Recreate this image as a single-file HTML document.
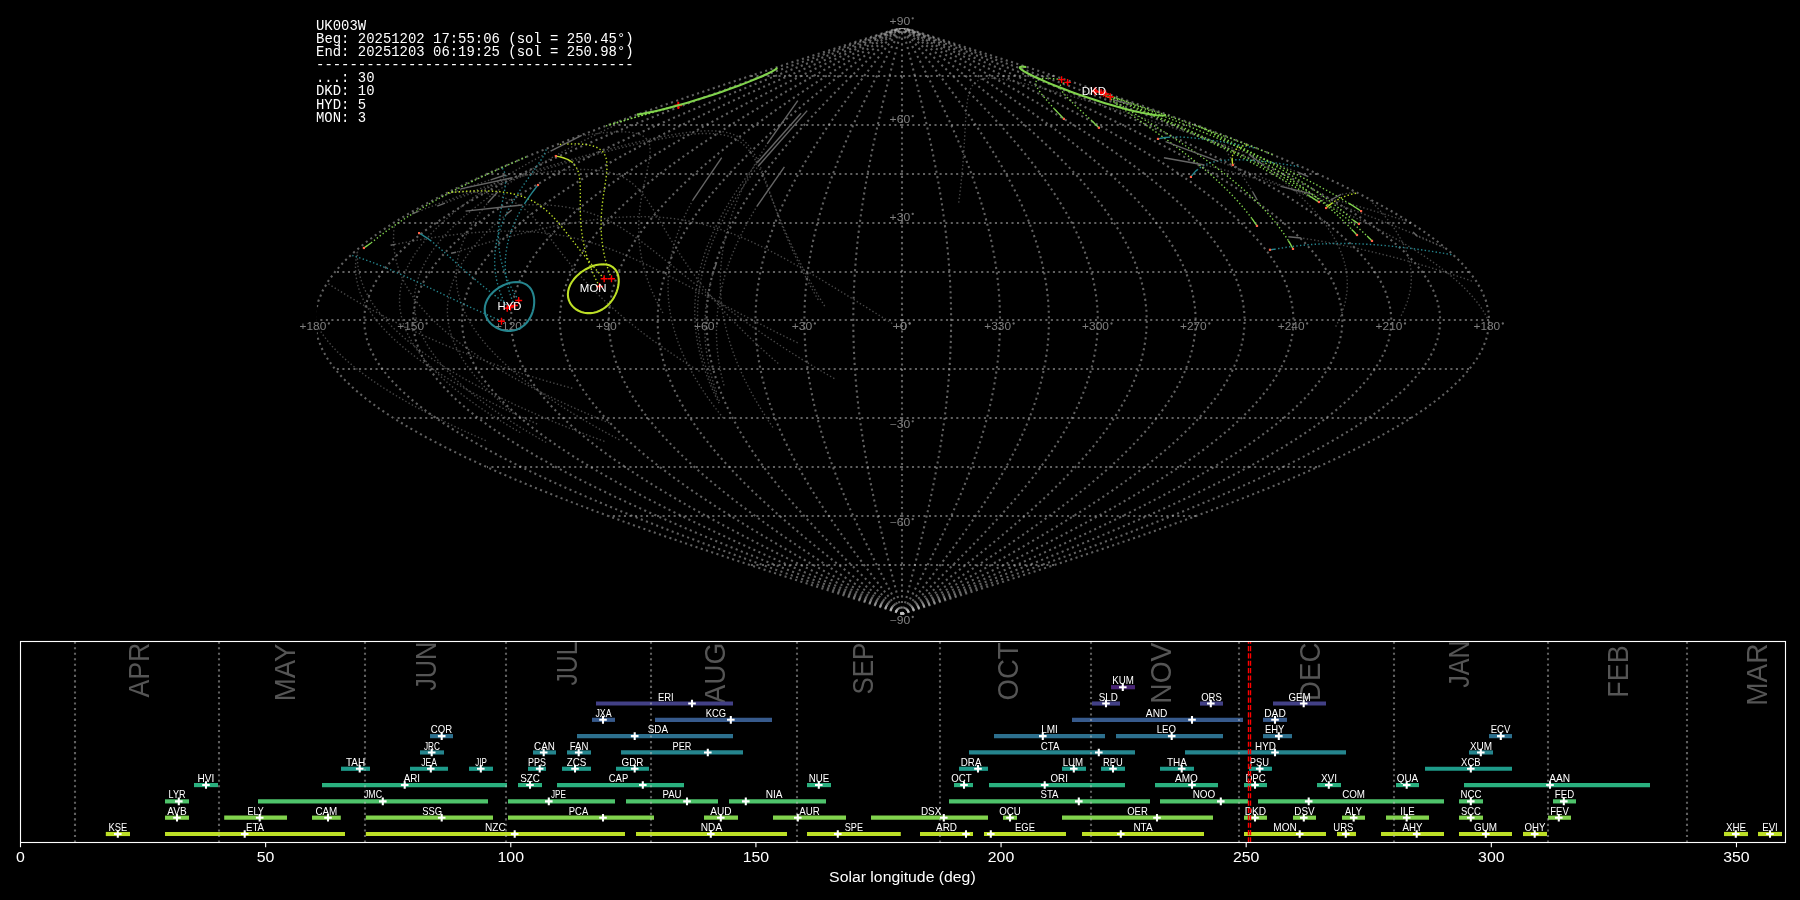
<!DOCTYPE html>
<html><head><meta charset="utf-8"><title>UK003W shower association</title>
<style>html,body{margin:0;padding:0;background:#000;}svg{display:block;font-family:"Liberation Sans",sans-serif;}text{filter:grayscale(1);}</style></head>
<body>
<svg width="1800" height="900" viewBox="0 0 1800 900">
<rect width="1800" height="900" fill="#000"/>
<g id="grid" clip-path="url(#skyclip)" fill="none" stroke="#c0c0c0" stroke-opacity="0.5" stroke-width="2.08" stroke-dasharray="2.08 3.44">
<path d="M902 614L902 604L902 594L902 585L902 575L902 565L902 555L902 546L902 536L902 526L902 516L902 506L902 497L902 487L902 477L902 467L902 457L902 448L902 438L902 428L902 418L902 409L902 399L902 389L902 379L902 369L902 360L902 350L902 340L902 330L902 320L902 311L902 301L902 291L902 281L902 272L902 262L902 252L902 242L902 232L902 223L902 213L902 203L902 193L902 184L902 174L902 164L902 154L902 144L902 135L902 125L902 115L902 105L902 95L902 86L902 76L902 66L902 56L902 47L902 37L902 27"/>
<path d="M902.2 613.99L899.64 604.21L897.09 594.42L894.55 584.64L892.03 574.86L889.54 565.08L887.08 555.29L884.67 545.51L882.3 535.73L879.99 525.94L877.74 516.16L875.56 506.38L873.45 496.59L871.42 486.81L869.47 477.03L867.61 467.25L865.85 457.46L864.19 447.68L862.63 437.9L861.18 428.11L859.84 418.33L858.62 408.55L857.51 398.76L856.53 388.98L855.68 379.2L854.95 369.42L854.35 359.63L853.89 349.85L853.55 340.07L853.35 330.28L853.29 320.5L853.35 310.72L853.55 300.93L853.89 291.15L854.35 281.37L854.95 271.58L855.68 261.8L856.53 252.02L857.51 242.24L858.62 232.45L859.84 222.67L861.18 212.89L862.63 203.1L864.19 193.32L865.85 183.54L867.61 173.75L869.47 163.97L871.42 154.19L873.45 144.41L875.56 134.62L877.74 124.84L879.99 115.06L882.3 105.27L884.67 95.49L887.08 85.71L889.54 75.92L892.03 66.14L894.55 56.36L897.09 46.58L899.64 36.79L902.2 27.01"/>
<path d="M902.2 613.99L897.08 604.21L891.97 594.42L886.9 584.64L881.86 574.86L876.88 565.08L871.97 555.29L867.14 545.51L862.41 535.73L857.79 525.94L853.29 516.16L848.92 506.38L844.7 496.59L840.63 486.81L836.74 477.03L833.02 467.25L829.5 457.46L826.17 447.68L823.05 437.9L820.15 428.11L817.48 418.33L815.03 408.55L812.83 398.76L810.87 388.98L809.16 379.2L807.7 369.42L806.51 359.63L805.57 349.85L804.91 340.07L804.5 330.28L804.37 320.5L804.5 310.72L804.91 300.93L805.57 291.15L806.51 281.37L807.7 271.58L809.16 261.8L810.87 252.02L812.83 242.24L815.03 232.45L817.48 222.67L820.15 212.89L823.05 203.1L826.17 193.32L829.5 183.54L833.02 173.75L836.74 163.97L840.63 154.19L844.7 144.41L848.92 134.62L853.29 124.84L857.79 115.06L862.41 105.27L867.14 95.49L871.97 85.71L876.88 75.92L881.86 66.14L886.9 56.36L891.97 46.58L897.08 36.79L902.2 27.01"/>
<path d="M902.2 613.99L894.52 604.21L886.86 594.42L879.24 584.64L871.69 574.86L864.22 565.08L856.85 555.29L849.61 545.51L842.51 535.73L835.58 525.94L828.83 516.16L822.28 506.38L815.95 496.59L809.85 486.81L804.01 477.03L798.44 467.25L793.15 457.46L788.16 447.68L783.48 437.9L779.13 428.11L775.12 418.33L771.45 408.55L768.14 398.76L765.2 388.98L762.64 379.2L760.46 369.42L758.66 359.63L757.26 349.85L756.26 340.07L755.66 330.28L755.46 320.5L755.66 310.72L756.26 300.93L757.26 291.15L758.66 281.37L760.46 271.58L762.64 261.8L765.2 252.02L768.14 242.24L771.45 232.45L775.12 222.67L779.13 212.89L783.48 203.1L788.16 193.32L793.15 183.54L798.44 173.75L804.01 163.97L809.85 154.19L815.95 144.41L822.28 134.62L828.83 124.84L835.58 115.06L842.51 105.27L849.61 95.49L856.85 85.71L864.22 75.92L871.69 66.14L879.24 56.36L886.86 46.58L894.52 36.79L902.2 27.01"/>
<path d="M902.2 613.99L891.96 604.21L881.75 594.42L871.59 584.64L861.52 574.86L851.56 565.08L841.74 555.29L832.08 545.51L822.62 535.73L813.37 525.94L804.37 516.16L795.64 506.38L787.19 496.59L779.07 486.81L771.28 477.03L763.85 467.25L756.8 457.46L750.14 447.68L743.91 437.9L738.11 428.11L732.75 418.33L727.87 408.55L723.46 398.76L719.54 388.98L716.12 379.2L713.21 369.42L710.82 359.63L708.95 349.85L707.61 340.07L706.81 330.28L706.54 320.5L706.81 310.72L707.61 300.93L708.95 291.15L710.82 281.37L713.21 271.58L716.12 261.8L719.54 252.02L723.46 242.24L727.87 232.45L732.75 222.67L738.11 212.89L743.91 203.1L750.14 193.32L756.8 183.54L763.85 173.75L771.28 163.97L779.07 154.19L787.19 144.41L795.64 134.62L804.37 124.84L813.37 115.06L822.62 105.27L832.08 95.49L841.74 85.71L851.56 75.92L861.52 66.14L871.59 56.36L881.75 46.58L891.96 36.79L902.2 27.01"/>
<path d="M902.2 613.99L889.4 604.21L876.63 594.42L863.94 584.64L851.35 574.86L838.9 565.08L826.62 555.29L814.55 545.51L802.72 535.73L791.17 525.94L779.91 516.16L768.99 506.38L758.44 496.59L748.28 486.81L738.55 477.03L729.26 467.25L720.45 457.46L712.13 447.68L704.33 437.9L697.08 428.11L690.39 418.33L684.28 408.55L678.77 398.76L673.87 388.98L669.6 379.2L665.96 369.42L662.97 359.63L660.64 349.85L658.96 340.07L657.96 330.28L657.62 320.5L657.96 310.72L658.96 300.93L660.64 291.15L662.97 281.37L665.96 271.58L669.6 261.8L673.87 252.02L678.77 242.24L684.28 232.45L690.39 222.67L697.08 212.89L704.33 203.1L712.13 193.32L720.45 183.54L729.26 173.75L738.55 163.97L748.28 154.19L758.44 144.41L768.99 134.62L779.91 124.84L791.17 115.06L802.72 105.27L814.55 95.49L826.62 85.71L838.9 75.92L851.35 66.14L863.94 56.36L876.63 46.58L889.4 36.79L902.2 27.01"/>
<path d="M902.2 613.99L886.84 604.21L871.52 594.42L856.29 584.64L841.18 574.86L826.24 565.08L811.51 555.29L797.02 545.51L782.83 535.73L768.96 525.94L755.46 516.16L742.35 506.38L729.69 496.59L717.5 486.81L705.82 477.03L694.67 467.25L684.09 457.46L674.12 447.68L664.76 437.9L656.06 428.11L648.03 418.33L640.7 408.55L634.08 398.76L628.2 388.98L623.07 379.2L618.71 369.42L615.12 359.63L612.32 349.85L610.32 340.07L609.11 330.28L608.71 320.5L609.11 310.72L610.32 300.93L612.32 291.15L615.12 281.37L618.71 271.58L623.07 261.8L628.2 252.02L634.08 242.24L640.7 232.45L648.03 222.67L656.06 212.89L664.76 203.1L674.12 193.32L684.09 183.54L694.67 173.75L705.82 163.97L717.5 154.19L729.69 144.41L742.35 134.62L755.46 124.84L768.96 115.06L782.83 105.27L797.02 95.49L811.51 85.71L826.24 75.92L841.18 66.14L856.29 56.36L871.52 46.58L886.84 36.79L902.2 27.01"/>
<path d="M902.2 613.99L884.28 604.21L866.41 594.42L848.64 584.64L831.01 574.86L813.58 565.08L796.39 555.29L779.49 545.51L762.93 535.73L746.75 525.94L731 516.16L715.71 506.38L700.94 496.59L686.72 486.81L673.09 477.03L660.08 467.25L647.74 457.46L636.1 447.68L625.19 437.9L615.04 428.11L605.67 418.33L597.11 408.55L589.4 398.76L582.54 388.98L576.55 379.2L571.46 369.42L567.28 359.63L564.01 349.85L561.67 340.07L560.26 330.28L559.8 320.5L560.26 310.72L561.67 300.93L564.01 291.15L567.28 281.37L571.46 271.58L576.55 261.8L582.54 252.02L589.4 242.24L597.11 232.45L605.67 222.67L615.04 212.89L625.19 203.1L636.1 193.32L647.74 183.54L660.08 173.75L673.09 163.97L686.72 154.19L700.94 144.41L715.71 134.62L731 124.84L746.75 115.06L762.93 105.27L779.49 95.49L796.39 85.71L813.58 75.92L831.01 66.14L848.64 56.36L866.41 46.58L884.28 36.79L902.2 27.01"/>
<path d="M902.2 613.99L881.72 604.21L861.3 594.42L840.98 584.64L820.84 574.86L800.92 565.08L781.28 555.29L761.96 545.51L743.04 535.73L724.54 525.94L706.54 516.16L689.07 506.38L672.19 496.59L655.93 486.81L640.36 477.03L625.49 467.25L611.39 457.46L598.09 447.68L585.62 437.9L574.01 428.11L563.31 418.33L553.53 408.55L544.71 398.76L536.87 388.98L530.03 379.2L524.21 369.42L519.43 359.63L515.7 349.85L513.02 340.07L511.42 330.28L510.88 320.5L511.42 310.72L513.02 300.93L515.7 291.15L519.43 281.37L524.21 271.58L530.03 261.8L536.87 252.02L544.71 242.24L553.53 232.45L563.31 222.67L574.01 212.89L585.62 203.1L598.09 193.32L611.39 183.54L625.49 173.75L640.36 163.97L655.93 154.19L672.19 144.41L689.07 134.62L706.54 124.84L724.54 115.06L743.04 105.27L761.96 95.49L781.28 85.71L800.92 75.92L820.84 66.14L840.98 56.36L861.3 46.58L881.72 36.79L902.2 27.01"/>
<path d="M902.2 613.99L879.16 604.21L856.18 594.42L833.33 584.64L810.67 574.86L788.26 565.08L766.16 555.29L744.43 545.51L723.14 535.73L702.34 525.94L682.08 516.16L662.43 506.38L643.44 496.59L625.15 486.81L607.63 477.03L590.91 467.25L575.04 457.46L560.07 447.68L546.04 437.9L532.99 428.11L520.95 418.33L509.95 408.55L500.03 398.76L491.21 388.98L483.51 379.2L476.97 369.42L471.59 359.63L467.39 349.85L464.38 340.07L462.57 330.28L461.97 320.5L462.57 310.72L464.38 300.93L467.39 291.15L471.59 281.37L476.97 271.58L483.51 261.8L491.21 252.02L500.03 242.24L509.95 232.45L520.95 222.67L532.99 212.89L546.04 203.1L560.07 193.32L575.04 183.54L590.91 173.75L607.63 163.97L625.15 154.19L643.44 144.41L662.43 134.62L682.08 124.84L702.34 115.06L723.14 105.27L744.43 95.49L766.16 85.71L788.26 75.92L810.67 66.14L833.33 56.36L856.18 46.58L879.16 36.79L902.2 27.01"/>
<path d="M902.2 613.99L876.6 604.21L851.07 594.42L825.68 584.64L800.5 574.86L775.6 565.08L751.04 555.29L726.9 545.51L703.24 535.73L680.13 525.94L657.62 516.16L635.79 506.38L614.68 496.59L594.37 486.81L574.89 477.03L556.32 467.25L538.69 457.46L522.06 447.68L506.47 437.9L491.96 428.11L478.58 418.33L466.36 408.55L455.34 398.76L445.54 388.98L436.99 379.2L429.72 369.42L423.74 359.63L419.07 349.85L415.73 340.07L413.72 330.28L413.05 320.5L413.72 310.72L415.73 300.93L419.07 291.15L423.74 281.37L429.72 271.58L436.99 261.8L445.54 252.02L455.34 242.24L466.36 232.45L478.58 222.67L491.96 212.89L506.47 203.1L522.06 193.32L538.69 183.54L556.32 173.75L574.89 163.97L594.37 154.19L614.68 144.41L635.79 134.62L657.62 124.84L680.13 115.06L703.24 105.27L726.9 95.49L751.04 85.71L775.6 75.92L800.5 66.14L825.68 56.36L851.07 46.58L876.6 36.79L902.2 27.01"/>
<path d="M902.2 613.99L874.04 604.21L845.96 594.42L818.03 584.64L790.33 574.86L762.94 565.08L735.93 555.29L709.37 545.51L683.35 535.73L657.92 525.94L633.17 516.16L609.15 506.38L585.93 496.59L563.58 486.81L542.16 477.03L521.73 467.25L502.34 457.46L484.04 447.68L466.9 437.9L450.94 428.11L436.22 418.33L422.78 408.55L410.65 398.76L399.87 388.98L390.47 379.2L382.47 369.42L375.89 359.63L370.76 349.85L367.08 340.07L364.87 330.28L364.13 320.5L364.87 310.72L367.08 300.93L370.76 291.15L375.89 281.37L382.47 271.58L390.47 261.8L399.87 252.02L410.65 242.24L422.78 232.45L436.22 222.67L450.94 212.89L466.9 203.1L484.04 193.32L502.34 183.54L521.73 173.75L542.16 163.97L563.58 154.19L585.93 144.41L609.15 134.62L633.17 124.84L657.92 115.06L683.35 105.27L709.37 95.49L735.93 85.71L762.94 75.92L790.33 66.14L818.03 56.36L845.96 46.58L874.04 36.79L902.2 27.01"/>
<path d="M902.2 613.99L871.48 604.21L840.84 594.42L810.38 584.64L780.16 574.86L750.28 565.08L720.81 555.29L691.85 545.51L663.45 535.73L635.72 525.94L608.71 516.16L582.51 506.38L557.18 496.59L532.8 486.81L509.43 477.03L487.14 467.25L465.99 457.46L446.03 447.68L427.32 437.9L409.92 428.11L393.86 418.33L379.2 408.55L365.97 398.76L354.21 388.98L343.95 379.2L335.22 369.42L328.05 359.63L322.45 349.85L318.44 340.07L316.02 330.28L315.22 320.5L316.02 310.72L318.44 300.93L322.45 291.15L328.05 281.37L335.22 271.58L343.95 261.8L354.21 252.02L365.97 242.24L379.2 232.45L393.86 222.67L409.92 212.89L427.32 203.1L446.03 193.32L465.99 183.54L487.14 173.75L509.43 163.97L532.8 154.19L557.18 144.41L582.51 134.62L608.71 124.84L635.72 115.06L663.45 105.27L691.85 95.49L720.81 85.71L750.28 75.92L780.16 66.14L810.38 56.36L840.84 46.58L871.48 36.79L902.2 27.01"/>
<path d="M902.2 613.99L932.92 604.21L963.56 594.42L994.02 584.64L1024.24 574.86L1054.12 565.08L1083.59 555.29L1112.55 545.51L1140.95 535.73L1168.68 525.94L1195.69 516.16L1221.89 506.38L1247.22 496.59L1271.6 486.81L1294.97 477.03L1317.26 467.25L1338.41 457.46L1358.37 447.68L1377.08 437.9L1394.48 428.11L1410.54 418.33L1425.2 408.55L1438.43 398.76L1450.19 388.98L1460.45 379.2L1469.18 369.42L1476.35 359.63L1481.95 349.85L1485.96 340.07L1488.38 330.28L1489.18 320.5L1488.38 310.72L1485.96 300.93L1481.95 291.15L1476.35 281.37L1469.18 271.58L1460.45 261.8L1450.19 252.02L1438.43 242.24L1425.2 232.45L1410.54 222.67L1394.48 212.89L1377.08 203.1L1358.37 193.32L1338.41 183.54L1317.26 173.75L1294.97 163.97L1271.6 154.19L1247.22 144.41L1221.89 134.62L1195.69 124.84L1168.68 115.06L1140.95 105.27L1112.55 95.49L1083.59 85.71L1054.12 75.92L1024.24 66.14L994.02 56.36L963.56 46.58L932.92 36.79L902.2 27.01"/>
<path d="M902.2 613.99L930.36 604.21L958.44 594.42L986.37 584.64L1014.07 574.86L1041.46 565.08L1068.47 555.29L1095.03 545.51L1121.05 535.73L1146.48 525.94L1171.23 516.16L1195.25 506.38L1218.47 496.59L1240.82 486.81L1262.24 477.03L1282.67 467.25L1302.06 457.46L1320.36 447.68L1337.5 437.9L1353.46 428.11L1368.18 418.33L1381.62 408.55L1393.75 398.76L1404.53 388.98L1413.93 379.2L1421.93 369.42L1428.51 359.63L1433.64 349.85L1437.32 340.07L1439.53 330.28L1440.27 320.5L1439.53 310.72L1437.32 300.93L1433.64 291.15L1428.51 281.37L1421.93 271.58L1413.93 261.8L1404.53 252.02L1393.75 242.24L1381.62 232.45L1368.18 222.67L1353.46 212.89L1337.5 203.1L1320.36 193.32L1302.06 183.54L1282.67 173.75L1262.24 163.97L1240.82 154.19L1218.47 144.41L1195.25 134.62L1171.23 124.84L1146.48 115.06L1121.05 105.27L1095.03 95.49L1068.47 85.71L1041.46 75.92L1014.07 66.14L986.37 56.36L958.44 46.58L930.36 36.79L902.2 27.01"/>
<path d="M902.2 613.99L927.8 604.21L953.33 594.42L978.72 584.64L1003.9 574.86L1028.8 565.08L1053.36 555.29L1077.5 545.51L1101.16 535.73L1124.27 525.94L1146.78 516.16L1168.61 506.38L1189.72 496.59L1210.03 486.81L1229.51 477.03L1248.08 467.25L1265.71 457.46L1282.34 447.68L1297.93 437.9L1312.44 428.11L1325.82 418.33L1338.04 408.55L1349.06 398.76L1358.86 388.98L1367.41 379.2L1374.68 369.42L1380.66 359.63L1385.33 349.85L1388.67 340.07L1390.68 330.28L1391.35 320.5L1390.68 310.72L1388.67 300.93L1385.33 291.15L1380.66 281.37L1374.68 271.58L1367.41 261.8L1358.86 252.02L1349.06 242.24L1338.04 232.45L1325.82 222.67L1312.44 212.89L1297.93 203.1L1282.34 193.32L1265.71 183.54L1248.08 173.75L1229.51 163.97L1210.03 154.19L1189.72 144.41L1168.61 134.62L1146.78 124.84L1124.27 115.06L1101.16 105.27L1077.5 95.49L1053.36 85.71L1028.8 75.92L1003.9 66.14L978.72 56.36L953.33 46.58L927.8 36.79L902.2 27.01"/>
<path d="M902.2 613.99L925.24 604.21L948.22 594.42L971.07 584.64L993.73 574.86L1016.14 565.08L1038.24 555.29L1059.97 545.51L1081.26 535.73L1102.06 525.94L1122.32 516.16L1141.97 506.38L1160.96 496.59L1179.25 486.81L1196.77 477.03L1213.49 467.25L1229.36 457.46L1244.33 447.68L1258.36 437.9L1271.41 428.11L1283.45 418.33L1294.45 408.55L1304.37 398.76L1313.19 388.98L1320.89 379.2L1327.43 369.42L1332.81 359.63L1337.01 349.85L1340.02 340.07L1341.83 330.28L1342.43 320.5L1341.83 310.72L1340.02 300.93L1337.01 291.15L1332.81 281.37L1327.43 271.58L1320.89 261.8L1313.19 252.02L1304.37 242.24L1294.45 232.45L1283.45 222.67L1271.41 212.89L1258.36 203.1L1244.33 193.32L1229.36 183.54L1213.49 173.75L1196.77 163.97L1179.25 154.19L1160.96 144.41L1141.97 134.62L1122.32 124.84L1102.06 115.06L1081.26 105.27L1059.97 95.49L1038.24 85.71L1016.14 75.92L993.73 66.14L971.07 56.36L948.22 46.58L925.24 36.79L902.2 27.01"/>
<path d="M902.2 613.99L922.68 604.21L943.1 594.42L963.42 584.64L983.56 574.86L1003.48 565.08L1023.12 555.29L1042.44 545.51L1061.36 535.73L1079.86 525.94L1097.86 516.16L1115.33 506.38L1132.21 496.59L1148.47 486.81L1164.04 477.03L1178.91 467.25L1193.01 457.46L1206.31 447.68L1218.78 437.9L1230.39 428.11L1241.09 418.33L1250.87 408.55L1259.69 398.76L1267.53 388.98L1274.37 379.2L1280.19 369.42L1284.97 359.63L1288.7 349.85L1291.38 340.07L1292.98 330.28L1293.52 320.5L1292.98 310.72L1291.38 300.93L1288.7 291.15L1284.97 281.37L1280.19 271.58L1274.37 261.8L1267.53 252.02L1259.69 242.24L1250.87 232.45L1241.09 222.67L1230.39 212.89L1218.78 203.1L1206.31 193.32L1193.01 183.54L1178.91 173.75L1164.04 163.97L1148.47 154.19L1132.21 144.41L1115.33 134.62L1097.86 124.84L1079.86 115.06L1061.36 105.27L1042.44 95.49L1023.12 85.71L1003.48 75.92L983.56 66.14L963.42 56.36L943.1 46.58L922.68 36.79L902.2 27.01"/>
<path d="M902.2 613.99L920.12 604.21L937.99 594.42L955.76 584.64L973.39 574.86L990.82 565.08L1008.01 555.29L1024.91 545.51L1041.47 535.73L1057.65 525.94L1073.4 516.16L1088.69 506.38L1103.46 496.59L1117.68 486.81L1131.31 477.03L1144.32 467.25L1156.66 457.46L1168.3 447.68L1179.21 437.9L1189.36 428.11L1198.73 418.33L1207.29 408.55L1215 398.76L1221.86 388.98L1227.85 379.2L1232.94 369.42L1237.12 359.63L1240.39 349.85L1242.73 340.07L1244.14 330.28L1244.61 320.5L1244.14 310.72L1242.73 300.93L1240.39 291.15L1237.12 281.37L1232.94 271.58L1227.85 261.8L1221.86 252.02L1215 242.24L1207.29 232.45L1198.73 222.67L1189.36 212.89L1179.21 203.1L1168.3 193.32L1156.66 183.54L1144.32 173.75L1131.31 163.97L1117.68 154.19L1103.46 144.41L1088.69 134.62L1073.4 124.84L1057.65 115.06L1041.47 105.27L1024.91 95.49L1008.01 85.71L990.82 75.92L973.39 66.14L955.76 56.36L937.99 46.58L920.12 36.79L902.2 27.01"/>
<path d="M902.2 613.99L917.56 604.21L932.88 594.42L948.11 584.64L963.22 574.86L978.16 565.08L992.89 555.29L1007.38 545.51L1021.57 535.73L1035.44 525.94L1048.95 516.16L1062.05 506.38L1074.71 496.59L1086.9 486.81L1098.58 477.03L1109.73 467.25L1120.31 457.46L1130.28 447.68L1139.64 437.9L1148.34 428.11L1156.37 418.33L1163.7 408.55L1170.32 398.76L1176.2 388.98L1181.33 379.2L1185.69 369.42L1189.28 359.63L1192.08 349.85L1194.08 340.07L1195.29 330.28L1195.69 320.5L1195.29 310.72L1194.08 300.93L1192.08 291.15L1189.28 281.37L1185.69 271.58L1181.33 261.8L1176.2 252.02L1170.32 242.24L1163.7 232.45L1156.37 222.67L1148.34 212.89L1139.64 203.1L1130.28 193.32L1120.31 183.54L1109.73 173.75L1098.58 163.97L1086.9 154.19L1074.71 144.41L1062.05 134.62L1048.95 124.84L1035.44 115.06L1021.57 105.27L1007.38 95.49L992.89 85.71L978.16 75.92L963.22 66.14L948.11 56.36L932.88 46.58L917.56 36.79L902.2 27.01"/>
<path d="M902.2 613.99L915 604.21L927.77 594.42L940.46 584.64L953.05 574.86L965.5 565.08L977.78 555.29L989.85 545.51L1001.68 535.73L1013.23 525.94L1024.49 516.16L1035.41 506.38L1045.96 496.59L1056.12 486.81L1065.85 477.03L1075.14 467.25L1083.95 457.46L1092.27 447.68L1100.07 437.9L1107.32 428.11L1114.01 418.33L1120.12 408.55L1125.63 398.76L1130.53 388.98L1134.8 379.2L1138.44 369.42L1141.43 359.63L1143.76 349.85L1145.44 340.07L1146.44 330.28L1146.78 320.5L1146.44 310.72L1145.44 300.93L1143.76 291.15L1141.43 281.37L1138.44 271.58L1134.8 261.8L1130.53 252.02L1125.63 242.24L1120.12 232.45L1114.01 222.67L1107.32 212.89L1100.07 203.1L1092.27 193.32L1083.95 183.54L1075.14 173.75L1065.85 163.97L1056.12 154.19L1045.96 144.41L1035.41 134.62L1024.49 124.84L1013.23 115.06L1001.68 105.27L989.85 95.49L977.78 85.71L965.5 75.92L953.05 66.14L940.46 56.36L927.77 46.58L915 36.79L902.2 27.01"/>
<path d="M902.2 613.99L912.44 604.21L922.65 594.42L932.81 584.64L942.88 574.86L952.84 565.08L962.66 555.29L972.32 545.51L981.78 535.73L991.03 525.94L1000.03 516.16L1008.76 506.38L1017.21 496.59L1025.33 486.81L1033.12 477.03L1040.55 467.25L1047.6 457.46L1054.26 447.68L1060.49 437.9L1066.29 428.11L1071.65 418.33L1076.53 408.55L1080.94 398.76L1084.86 388.98L1088.28 379.2L1091.19 369.42L1093.58 359.63L1095.45 349.85L1096.79 340.07L1097.59 330.28L1097.86 320.5L1097.59 310.72L1096.79 300.93L1095.45 291.15L1093.58 281.37L1091.19 271.58L1088.28 261.8L1084.86 252.02L1080.94 242.24L1076.53 232.45L1071.65 222.67L1066.29 212.89L1060.49 203.1L1054.26 193.32L1047.6 183.54L1040.55 173.75L1033.12 163.97L1025.33 154.19L1017.21 144.41L1008.76 134.62L1000.03 124.84L991.03 115.06L981.78 105.27L972.32 95.49L962.66 85.71L952.84 75.92L942.88 66.14L932.81 56.36L922.65 46.58L912.44 36.79L902.2 27.01"/>
<path d="M902.2 613.99L909.88 604.21L917.54 594.42L925.16 584.64L932.71 574.86L940.18 565.08L947.55 555.29L954.79 545.51L961.89 535.73L968.82 525.94L975.57 516.16L982.12 506.38L988.45 496.59L994.55 486.81L1000.39 477.03L1005.96 467.25L1011.25 457.46L1016.24 447.68L1020.92 437.9L1025.27 428.11L1029.28 418.33L1032.95 408.55L1036.26 398.76L1039.2 388.98L1041.76 379.2L1043.94 369.42L1045.74 359.63L1047.14 349.85L1048.14 340.07L1048.74 330.28L1048.95 320.5L1048.74 310.72L1048.14 300.93L1047.14 291.15L1045.74 281.37L1043.94 271.58L1041.76 261.8L1039.2 252.02L1036.26 242.24L1032.95 232.45L1029.28 222.67L1025.27 212.89L1020.92 203.1L1016.24 193.32L1011.25 183.54L1005.96 173.75L1000.39 163.97L994.55 154.19L988.45 144.41L982.12 134.62L975.57 124.84L968.82 115.06L961.89 105.27L954.79 95.49L947.55 85.71L940.18 75.92L932.71 66.14L925.16 56.36L917.54 46.58L909.88 36.79L902.2 27.01"/>
<path d="M902.2 613.99L907.32 604.21L912.43 594.42L917.5 584.64L922.54 574.86L927.52 565.08L932.43 555.29L937.26 545.51L941.99 535.73L946.61 525.94L951.12 516.16L955.48 506.38L959.7 496.59L963.77 486.81L967.66 477.03L971.38 467.25L974.9 457.46L978.23 447.68L981.35 437.9L984.25 428.11L986.92 418.33L989.37 408.55L991.57 398.76L993.53 388.98L995.24 379.2L996.7 369.42L997.89 359.63L998.83 349.85L999.49 340.07L999.9 330.28L1000.03 320.5L999.9 310.72L999.49 300.93L998.83 291.15L997.89 281.37L996.7 271.58L995.24 261.8L993.53 252.02L991.57 242.24L989.37 232.45L986.92 222.67L984.25 212.89L981.35 203.1L978.23 193.32L974.9 183.54L971.38 173.75L967.66 163.97L963.77 154.19L959.7 144.41L955.48 134.62L951.12 124.84L946.61 115.06L941.99 105.27L937.26 95.49L932.43 85.71L927.52 75.92L922.54 66.14L917.5 56.36L912.43 46.58L907.32 36.79L902.2 27.01"/>
<path d="M902.2 613.99L904.76 604.21L907.31 594.42L909.85 584.64L912.37 574.86L914.86 565.08L917.32 555.29L919.73 545.51L922.1 535.73L924.41 525.94L926.66 516.16L928.84 506.38L930.95 496.59L932.98 486.81L934.93 477.03L936.79 467.25L938.55 457.46L940.21 447.68L941.77 437.9L943.22 428.11L944.56 418.33L945.78 408.55L946.89 398.76L947.87 388.98L948.72 379.2L949.45 369.42L950.05 359.63L950.51 349.85L950.85 340.07L951.05 330.28L951.12 320.5L951.05 310.72L950.85 300.93L950.51 291.15L950.05 281.37L949.45 271.58L948.72 261.8L947.87 252.02L946.89 242.24L945.78 232.45L944.56 222.67L943.22 212.89L941.77 203.1L940.21 193.32L938.55 183.54L936.79 173.75L934.93 163.97L932.98 154.19L930.95 144.41L928.84 134.62L926.66 124.84L924.41 115.06L922.1 105.27L919.73 95.49L917.32 85.71L914.86 75.92L912.37 66.14L909.85 56.36L907.31 46.58L904.76 36.79L902.2 27.01"/>
<path d="M902 565L890 565L877 565L864 565L852 565L839 565L826 565L814 565L801 565L788 565L776 565L763 565L750 565"/>
<path d="M1054 565L1041 565L1029 565L1016 565L1003 565L991 565L978 565L966 565L953 565L940 565L928 565L915 565L902 565"/>
<path d="M902 516L878 516L853 516L829 516L804 516L780 516L755 516L731 516L707 516L682 516L658 516L633 516L609 516"/>
<path d="M1196 516L1171 516L1147 516L1122 516L1098 516L1073 516L1049 516L1024 516L1000 516L976 516L951 516L927 516L902 516"/>
<path d="M902 467L868 467L833 467L798 467L764 467L729 467L695 467L660 467L625 467L591 467L556 467L522 467L487 467"/>
<path d="M1317 467L1283 467L1248 467L1213 467L1179 467L1144 467L1110 467L1075 467L1041 467L1006 467L971 467L937 467L902 467"/>
<path d="M902 418L860 418L817 418L775 418L733 418L690 418L648 418L606 418L563 418L521 418L479 418L436 418L394 418"/>
<path d="M1411 418L1368 418L1326 418L1283 418L1241 418L1199 418L1156 418L1114 418L1072 418L1029 418L987 418L945 418L902 418"/>
<path d="M902 369L855 369L808 369L760 369L713 369L666 369L619 369L571 369L524 369L477 369L430 369L382 369L335 369"/>
<path d="M1469 369L1422 369L1375 369L1327 369L1280 369L1233 369L1186 369L1138 369L1091 369L1044 369L997 369L949 369L902 369"/>
<path d="M902 320L853 320L804 320L755 320L707 320L658 320L609 320L560 320L511 320L462 320L413 320L364 320L315 320"/>
<path d="M1489 320L1440 320L1391 320L1342 320L1294 320L1245 320L1196 320L1147 320L1098 320L1049 320L1000 320L951 320L902 320"/>
<path d="M902 272L855 272L808 272L760 272L713 272L666 272L619 272L571 272L524 272L477 272L430 272L382 272L335 272"/>
<path d="M1469 272L1422 272L1375 272L1327 272L1280 272L1233 272L1186 272L1138 272L1091 272L1044 272L997 272L949 272L902 272"/>
<path d="M902 223L860 223L817 223L775 223L733 223L690 223L648 223L606 223L563 223L521 223L479 223L436 223L394 223"/>
<path d="M1411 223L1368 223L1326 223L1283 223L1241 223L1199 223L1156 223L1114 223L1072 223L1029 223L987 223L945 223L902 223"/>
<path d="M902 174L868 174L833 174L798 174L764 174L729 174L695 174L660 174L625 174L591 174L556 174L522 174L487 174"/>
<path d="M1317 174L1283 174L1248 174L1213 174L1179 174L1144 174L1110 174L1075 174L1041 174L1006 174L971 174L937 174L902 174"/>
<path d="M902 125L878 125L853 125L829 125L804 125L780 125L755 125L731 125L707 125L682 125L658 125L633 125L609 125"/>
<path d="M1196 125L1171 125L1147 125L1122 125L1098 125L1073 125L1049 125L1024 125L1000 125L976 125L951 125L927 125L902 125"/>
<path d="M902 76L890 76L877 76L864 76L852 76L839 76L826 76L814 76L801 76L788 76L776 76L763 76L750 76"/>
<path d="M1054 76L1041 76L1029 76L1016 76L1003 76L991 76L978 76L966 76L953 76L940 76L928 76L915 76L902 76"/>
</g>
<g id="gridlabels">
<text x="889.56" y="623.89" font-family="Liberation Sans" font-size="10.3" fill="#808080" textLength="20.58" lengthAdjust="spacingAndGlyphs">−90</text>
<circle cx="912.74" cy="616.99" r="1.15" fill="#808080" fill-opacity="0.85"/>
<text x="889.56" y="526.06" font-family="Liberation Sans" font-size="10.3" fill="#808080" textLength="20.58" lengthAdjust="spacingAndGlyphs">−60</text>
<circle cx="912.74" cy="519.16" r="1.15" fill="#808080" fill-opacity="0.85"/>
<text x="889.56" y="428.23" font-family="Liberation Sans" font-size="10.3" fill="#808080" textLength="20.58" lengthAdjust="spacingAndGlyphs">−30</text>
<circle cx="912.74" cy="421.33" r="1.15" fill="#808080" fill-opacity="0.85"/>
<text x="892.66" y="330.4" font-family="Liberation Sans" font-size="10.3" fill="#808080" textLength="14.38" lengthAdjust="spacingAndGlyphs">+0</text>
<circle cx="909.64" cy="323.5" r="1.15" fill="#808080" fill-opacity="0.85"/>
<text x="889.56" y="220.87" font-family="Liberation Sans" font-size="10.3" fill="#808080" textLength="20.58" lengthAdjust="spacingAndGlyphs">+30</text>
<circle cx="912.74" cy="213.97" r="1.15" fill="#808080" fill-opacity="0.85"/>
<text x="889.56" y="123.04" font-family="Liberation Sans" font-size="10.3" fill="#808080" textLength="20.58" lengthAdjust="spacingAndGlyphs">+60</text>
<circle cx="912.74" cy="116.14" r="1.15" fill="#808080" fill-opacity="0.85"/>
<text x="889.56" y="25.21" font-family="Liberation Sans" font-size="10.3" fill="#808080" textLength="20.58" lengthAdjust="spacingAndGlyphs">+90</text>
<circle cx="912.74" cy="18.31" r="1.15" fill="#808080" fill-opacity="0.85"/>
<text x="892.66" y="330.4" font-family="Liberation Sans" font-size="10.3" fill="#808080" textLength="14.38" lengthAdjust="spacingAndGlyphs">+0</text>
<circle cx="909.64" cy="323.5" r="1.15" fill="#808080" fill-opacity="0.85"/>
<text x="791.73" y="330.4" font-family="Liberation Sans" font-size="10.3" fill="#808080" textLength="20.58" lengthAdjust="spacingAndGlyphs">+30</text>
<circle cx="814.91" cy="323.5" r="1.15" fill="#808080" fill-opacity="0.85"/>
<text x="693.9" y="330.4" font-family="Liberation Sans" font-size="10.3" fill="#808080" textLength="20.58" lengthAdjust="spacingAndGlyphs">+60</text>
<circle cx="717.08" cy="323.5" r="1.15" fill="#808080" fill-opacity="0.85"/>
<text x="596.07" y="330.4" font-family="Liberation Sans" font-size="10.3" fill="#808080" textLength="20.58" lengthAdjust="spacingAndGlyphs">+90</text>
<circle cx="619.25" cy="323.5" r="1.15" fill="#808080" fill-opacity="0.85"/>
<text x="495.14" y="330.4" font-family="Liberation Sans" font-size="10.3" fill="#808080" textLength="26.78" lengthAdjust="spacingAndGlyphs">+120</text>
<circle cx="524.52" cy="323.5" r="1.15" fill="#808080" fill-opacity="0.85"/>
<text x="397.31" y="330.4" font-family="Liberation Sans" font-size="10.3" fill="#808080" textLength="26.78" lengthAdjust="spacingAndGlyphs">+150</text>
<circle cx="426.69" cy="323.5" r="1.15" fill="#808080" fill-opacity="0.85"/>
<text x="299.48" y="330.4" font-family="Liberation Sans" font-size="10.3" fill="#808080" textLength="26.78" lengthAdjust="spacingAndGlyphs">+180</text>
<circle cx="328.86" cy="323.5" r="1.15" fill="#808080" fill-opacity="0.85"/>
<text x="1473.44" y="330.4" font-family="Liberation Sans" font-size="10.3" fill="#808080" textLength="26.78" lengthAdjust="spacingAndGlyphs">+180</text>
<circle cx="1502.82" cy="323.5" r="1.15" fill="#808080" fill-opacity="0.85"/>
<text x="1375.61" y="330.4" font-family="Liberation Sans" font-size="10.3" fill="#808080" textLength="26.78" lengthAdjust="spacingAndGlyphs">+210</text>
<circle cx="1404.99" cy="323.5" r="1.15" fill="#808080" fill-opacity="0.85"/>
<text x="1277.78" y="330.4" font-family="Liberation Sans" font-size="10.3" fill="#808080" textLength="26.78" lengthAdjust="spacingAndGlyphs">+240</text>
<circle cx="1307.16" cy="323.5" r="1.15" fill="#808080" fill-opacity="0.85"/>
<text x="1179.95" y="330.4" font-family="Liberation Sans" font-size="10.3" fill="#808080" textLength="26.78" lengthAdjust="spacingAndGlyphs">+270</text>
<circle cx="1209.33" cy="323.5" r="1.15" fill="#808080" fill-opacity="0.85"/>
<text x="1082.12" y="330.4" font-family="Liberation Sans" font-size="10.3" fill="#808080" textLength="26.78" lengthAdjust="spacingAndGlyphs">+300</text>
<circle cx="1111.5" cy="323.5" r="1.15" fill="#808080" fill-opacity="0.85"/>
<text x="984.29" y="330.4" font-family="Liberation Sans" font-size="10.3" fill="#808080" textLength="26.78" lengthAdjust="spacingAndGlyphs">+330</text>
<circle cx="1013.67" cy="323.5" r="1.15" fill="#808080" fill-opacity="0.85"/>
</g>
<defs><clipPath id="skyclip"><rect x="316.9" y="28.2" width="1300" height="620"/></clipPath></defs>
<g id="sky" clip-path="url(#skyclip)">
<g fill="none" stroke-width="1.39" stroke-dasharray="1.39 2.29">
<path d="M772.9 427.43L769.22 421.98L765.65 416.53L762.19 411.07L758.85 405.61L755.64 400.15L752.54 394.68L749.57 389.2L746.74 383.73L744.03 378.25L741.47 372.77L739.04 367.29L736.75 361.8L734.6 356.32L732.59 350.83L730.74 345.34L729.03 339.85L727.47 334.37L726.06 328.88L724.8 323.38L723.69 317.89L722.74 312.4L721.95 306.91L721.31 301.42L720.82 295.94L720.5 290.45L720.33 284.96L720.31 279.47L720.45 273.99L720.75 268.51L721.21 263.03L721.81 257.55L722.58 252.07L723.49 246.6L724.56 241.13L725.78 235.67L727.15 230.2L728.66 224.75L730.32 219.29L732.13 213.84L734.07 208.4L736.15 202.97L738.37 197.54L740.72 192.12L743.21 186.71L745.81 181.31L748.54 175.92L751.39 170.54L754.34 165.18L757.41 159.83L760.58 154.5L763.85 149.19L767.2 143.9" stroke="#666666" stroke-opacity="0.7"/>
<path d="M719.11 403.18L716.27 397.59L713.6 392L711.1 386.41L708.77 380.82L706.61 375.22L704.63 369.63L702.82 364.04L701.2 358.45L699.75 352.86L698.48 347.27L697.4 341.67L696.5 336.08L695.78 330.49L695.25 324.9L694.91 319.31L694.75 313.71L694.77 308.12L694.99 302.53L695.38 296.94L695.97 291.35L696.73 285.75L697.68 280.16L698.82 274.57L700.14 268.98L701.63 263.39L703.31 257.8L705.17 252.21L707.2 246.61L709.4 241.02L711.78 235.43L714.33 229.84L717.05 224.25L719.93 218.66L722.97 213.08L726.18 207.49L729.54 201.9L733.06 196.31L736.72 190.72L740.54 185.14L744.5 179.55L748.6 173.97L752.83 168.38L757.2 162.8" stroke="#666666" stroke-opacity="0.7"/>
<path d="M719.39 401.07L716.72 395.48L714.21 389.88L711.87 384.29L709.7 378.69L707.7 373.1L705.88 367.5L704.24 361.91L702.77 356.31L701.48 350.72L700.37 345.12L699.44 339.53L698.69 333.93L698.13 328.33L697.75 322.74L697.55 317.14L697.54 311.55L697.71 305.95L698.06 300.36L698.6 294.76L699.31 289.17L700.21 283.57L701.3 277.98L702.56 272.38L704 266.78L705.62 261.19L707.41 255.59L709.38 250L711.52 244.4L713.84 238.81L716.32 233.22L718.97 227.62L721.78 222.03L724.75 216.43L727.89 210.84L731.17 205.25L734.62 199.65L738.21 194.06L741.95 188.47L745.83 182.87L749.85 177.28L754.01 171.69L758.3 166.1" stroke="#666666" stroke-opacity="0.7"/>
<path d="M723.27 418.09L718.96 412.66L714.79 407.24L710.78 401.8L706.93 396.36L703.24 390.92L699.73 385.47L696.38 380.02L693.2 374.57L690.21 369.12L687.39 363.66L684.76 358.2L682.31 352.74L680.05 347.28L677.97 341.81L676.09 336.35L674.41 330.88L672.92 325.42L671.62 319.95L670.52 314.48L669.62 309.02L668.92 303.55L668.42 298.09L668.12 292.63L668.02 287.16L668.12 281.7L668.41 276.24L668.91 270.79L669.6 265.33L670.5 259.88L671.58 254.43L672.86 248.99L674.34 243.54L676.01 238.11L677.86 232.67L679.9 227.24L682.13 221.82L684.53 216.41L687.11 211L689.87 205.59L692.8 200.2" stroke="#666666" stroke-opacity="0.7"/>
<path d="M724.02 385.52L722.53 379.93L721.2 374.34L720.04 368.75L719.03 363.17L718.19 357.58L717.52 351.99L717.01 346.4L716.66 340.81L716.49 335.22L716.47 329.63L716.63 324.04L716.95 318.45L717.43 312.86L718.09 307.27L718.9 301.69L719.88 296.1L721.03 290.51L722.33 284.92L723.8 279.33L725.42 273.74L727.21 268.15L729.15 262.56L731.24 256.98L733.49 251.39L735.89 245.8L738.44 240.21L741.13 234.63L743.97 229.04L746.94 223.45L750.06 217.87L753.31 212.28L756.7 206.7" stroke="#666666" stroke-opacity="0.7"/>
<path d="M716.49 392L714.57 386.4L712.82 380.81L711.24 375.21L709.83 369.62L708.59 364.02L707.53 358.43L706.64 352.83L705.92 347.24L705.38 341.64L705.02 336.04L704.83 330.45L704.83 324.85L704.99 319.26L705.34 313.66L705.86 308.07L706.56 302.47L707.43 296.88L708.48 291.28L709.7 285.69L711.1 280.09L712.66 274.5L714.4 268.9" stroke="#666666" stroke-opacity="0.7"/>
<path d="M778.26 363.49L773.7 359.53L769.19 355.56L764.75 351.57L760.37 347.57L756.04 343.55L751.79 339.53L747.61 335.49L743.49 331.45L739.46 327.41L735.49 323.36L731.61 319.31L727.8 315.26L724.08 311.22L720.44 307.17L716.89 303.14L713.42 299.11L710.04 295.09L706.74 291.08L703.53 287.08L700.41 283.1L697.38 279.14L694.44 275.19L691.58 271.27L688.8 267.37L686.11 263.49L683.51 259.65L680.98 255.83L678.53 252.05L676.15 248.3L673.85 244.58L671.61 240.91L669.44 237.29L667.32 233.71L665.26 230.18L663.25 226.7L661.28 223.28L659.34 219.93L657.43 216.63L655.54 213.41L653.65 210.26L651.77 207.18L649.87 204.19L647.96 201.29L646.01 198.48L644.01 195.76L641.96 193.15L639.83 190.65L637.61 188.26L635.3 185.98L632.86 183.83L630.29 181.82L627.57 179.93L624.68 178.19L621.61 176.59L618.33 175.15L614.84 173.86L611.12 172.72L607.14 171.76L602.91 170.96L598.39 170.33L593.59 169.87L588.49 169.58L583.09 169.48L577.37 169.54L571.33 169.79L564.97 170.2L558.29 170.79L551.28 171.55L543.97 172.48L536.34 173.57L528.41 174.83L520.2 176.24L511.7 177.8" stroke="#666666" stroke-opacity="0.7"/>
<path d="M834.39 378.59L829.27 375.67L824.16 372.71L819.07 369.71L814 366.69L808.94 363.63L803.91 360.55L798.9 357.44L793.92 354.31L788.97 351.15L784.04 347.98L779.15 344.79L774.3 341.59L769.48 338.37L764.7 335.15L759.96 331.91L755.27 328.67L750.61 325.42L746.01 322.17L741.45 318.92L736.94 315.67L732.47 312.42L728.06 309.18L723.71 305.94L719.4 302.71L715.15 299.5L710.95 296.29L706.81 293.1L702.72 289.93L698.68 286.78L694.7 283.65L690.77 280.54L686.89 277.45L683.06 274.4L679.28 271.37L675.55 268.37L671.87 265.41L668.23 262.49L664.63 259.61L661.06 256.77L657.53 253.97L654.03 251.22L650.56 248.52L647.12 245.87L643.69 243.28L640.27 240.74L636.86 238.27L633.46 235.86L630.05 233.52L626.63 231.24L623.19 229.04L619.73 226.92L616.25 224.88L612.72 222.91L609.15 221.04L605.52 219.25L601.83 217.55L598.08 215.95L594.24 214.44L590.32 213.04L586.31 211.73L582.19 210.53L577.96 209.44L573.62 208.46L569.15 207.59L564.54 206.83L559.79 206.19L554.9 205.66L549.86 205.25L544.66 204.96L539.29 204.79L533.76 204.74L528.07 204.81L522.2 205" stroke="#666666" stroke-opacity="0.7"/>
<path d="M619.44 439.79L611.09 435.35L602.86 430.86L594.76 426.33L586.81 421.77L579.01 417.18L571.38 412.55L563.93 407.9L556.66 403.22L549.59 398.51L542.72 393.79L536.08 389.04L529.65 384.28L523.46 379.5L517.5 374.7L511.79 369.9L506.34 365.08L501.14 360.25L496.21 355.41L491.54 350.56L487.15 345.71L483.04 340.85L479.21 335.98L475.67 331.11L472.42 326.24L469.46 321.37L466.79 316.5L464.42 311.63L462.35 306.76L460.57 301.9L459.09 297.04L457.91 292.18L457.03 287.33L456.45 282.49L456.16 277.65L456.16 272.83L456.45 268.02L457.02 263.22L457.88 258.43L459.02 253.66L460.43 248.91L462.1 244.18L464.04 239.47L466.22 234.78L468.66 230.11L471.32 225.48L474.21 220.87L477.32 216.3L480.63 211.76L484.13 207.26L487.8 202.8" stroke="#666666" stroke-opacity="0.7"/>
<path d="M824.64 306.15L821.78 301.44L818.98 296.74L816.23 292.04L813.53 287.35L810.89 282.67L808.31 278L805.78 273.34L803.31 268.7L800.9 264.07L798.54 259.46L796.25 254.87L794.02 250.29L791.84 245.74L789.73 241.21L787.67 236.71L785.67 232.24L783.73 227.8L781.84 223.4L780 219.03L778.22 214.7L776.48 210.41L774.78 206.18L773.13 201.99L771.51 197.86L769.93 193.79L768.36 189.78L766.82 185.85L765.28 181.99L763.75 178.21L762.21 174.52L760.66 170.93L759.07 167.44L757.44 164.06L755.75 160.8L753.98 157.68L752.13 154.69L750.16 151.85L748.06 149.18L745.8 146.68L743.36 144.36L740.72 142.23L737.84 140.32L734.71 138.61L731.29 137.14L727.55 135.9L723.47 134.91L719.03 134.16L714.21 133.67L708.97 133.45L703.31 133.48L697.22 133.78L690.69 134.33L683.71 135.15L676.3 136.21L668.45 137.51L660.17 139.05L651.5 140.81L642.43 142.78L633 144.96L623.24 147.33L613.17 149.88L602.81 152.59L592.2 155.47L581.37 158.5L570.36 161.66L559.18 164.95L547.87 168.35L536.47 171.87L524.99 175.49L513.48 179.21L501.95 183.01L490.43 186.89L478.96 190.84L467.54 194.87L456.22 198.95L445 203.1" stroke="#666666" stroke-opacity="0.7"/>
<path d="M818.21 299.89L815.5 295.15L812.85 290.41L810.25 285.68L807.72 280.96L805.24 276.25L802.82 271.55L800.46 266.87L798.17 262.2L795.93 257.54L793.76 252.91L791.65 248.29L789.6 243.7L787.61 239.13L785.69 234.59L783.82 230.08L782.01 225.6L780.26 221.15L778.56 216.74L776.92 212.37L775.32 208.04L773.77 203.76L772.25 199.53L770.78 195.36L769.34 191.25L767.92 187.2L766.52 183.22L765.13 179.32L763.74 175.5L762.34 171.78L760.92 168.15L759.47 164.62L757.97 161.21L756.41 157.92L754.77 154.77L753.02 151.76L751.16 148.9L749.16 146.21L746.99 143.7L744.63 141.38L742.05 139.25L739.22 137.34L736.12 135.66L732.71 134.21L728.96 133L724.85 132.05L720.35 131.36L715.44 130.94L710.1 130.78L704.3 130.9L698.05 131.28L691.34 131.93L684.16 132.84L676.52 134.01L668.43 135.42L659.9 137.07L650.96 138.95L641.62 141.04L631.91 143.33L621.87 145.81L611.51 148.48L600.87 151.31L589.98 154.3L578.88 157.43L567.6 160.7L556.16 164.09L544.61 167.6L532.96 171.21L521.26 174.92L509.53 178.73L497.8 182.62L486.1 186.58L474.45 190.62L462.87 194.72L451.39 198.89L440.04 203.11L428.84 207.38L417.8 211.7" stroke="#666666" stroke-opacity="0.7"/>
<path d="M797.69 342.81L792.53 340.29L787.38 337.76L782.25 335.21L777.15 332.66L772.07 330.1L767.01 327.53L761.98 324.95L756.98 322.38L752 319.8L747.05 317.22L742.13 314.64L737.24 312.07L732.39 309.51L727.56 306.95L722.77 304.4L718 301.86L713.28 299.34L708.58 296.83L703.91 294.34L699.28 291.87L694.68 289.42L690.11 286.99L685.57 284.58L681.06 282.21L676.58 279.86L672.13 277.54L667.7 275.26L663.29 273.01L658.91 270.79L654.55 268.62L650.2 266.48L645.87 264.39L641.55 262.35L637.24 260.35L632.94 258.39L628.64 256.5L624.34 254.65L620.04 252.86L615.72 251.12L611.4 249.45L607.06 247.84L602.71 246.29L598.32 244.8L593.91 243.38L589.47 242.04L584.99 240.76L580.46 239.55L575.89 238.42L571.27 237.37L566.6 236.39L561.86 235.49L557.06 234.67L552.19 233.93L547.25 233.28L542.23 232.71L537.13 232.22L531.95 231.82L526.69 231.5L521.33 231.27L515.89 231.13L510.35 231.08L504.71 231.11L498.98 231.23L493.16 231.43L487.23 231.72L481.21 232.1L475.09 232.56L468.88 233.11L462.58 233.74L456.18 234.46L449.69 235.25L443.12 236.13L436.46 237.09L429.72 238.12L422.91 239.23L416.03 240.41L409.08 241.67L402.07 243L395 244.4" stroke="#666666" stroke-opacity="0.7"/>
<path d="M892.3 323.47L887.54 320.52L882.78 317.57L878.03 314.61L873.29 311.66L868.55 308.72L863.83 305.78L859.11 302.86L854.4 299.94L849.7 297.04L845.02 294.16L840.34 291.29L835.68 288.44L831.04 285.61L826.41 282.81L821.79 280.03L817.19 277.28L812.6 274.57L808.03 271.88L803.48 269.23L798.93 266.61L794.4 264.03L789.89 261.5L785.38 259.01L780.89 256.56L776.41 254.17L771.93 251.82L767.46 249.53L762.99 247.29L758.52 245.12L754.05 243L749.58 240.95L745.1 238.96L740.61 237.04L736.11 235.2L731.6 233.43L727.06 231.73L722.49 230.11L717.9 228.58L713.28 227.12L708.62 225.76L703.92 224.48L699.17 223.29L694.38 222.19L689.53 221.19L684.62 220.28L679.65 219.47L674.61 218.76L669.5 218.15L664.31 217.64L659.05 217.24L653.71 216.93L648.28 216.74L642.76 216.64L637.15 216.65L631.45 216.76L625.66 216.98L619.78 217.3L613.79 217.72L607.72 218.25L601.55 218.87L595.28 219.6L588.93 220.42L582.48 221.35L575.95 222.36L569.33 223.48L562.64 224.68L555.86 225.97L549.02 227.35L542.1 228.82L535.13 230.37L528.09 232L521.01 233.71L513.88 235.49L506.72 237.35L499.52 239.28L492.3 241.28L485.07 243.34L477.82 245.47L470.57 247.65L463.33 249.9L456.1 252.2" stroke="#666666" stroke-opacity="0.7"/>
<path d="M509.22 409.22L502.6 403.68L496.33 398.13L490.41 392.59L484.86 387.04L479.67 381.49L474.85 375.94L470.41 370.39L466.36 364.84L462.68 359.29L459.39 353.74L456.5 348.19L454 342.63L451.89 337.08L450.18 331.53L448.87 325.97L447.96 320.42L447.45 314.86L447.35 309.31L447.64 303.76L448.34 298.2L449.44 292.65L450.94 287.1L452.83 281.55L455.12 275.99L457.81 270.44L460.89 264.89L464.36 259.34L468.21 253.8L472.44 248.25L477.05 242.7L482.04 237.16L487.39 231.62L493.1 226.08L499.18 220.54L505.6 215" stroke="#666666" stroke-opacity="0.7"/>
<path d="M1401.08 315.74L1403.51 310.96L1405.61 306.18L1407.38 301.41L1408.83 296.64L1409.94 291.88L1410.73 287.12L1411.2 282.38L1411.34 277.64L1411.17 272.91L1410.67 268.2L1409.87 263.5L1408.76 258.81L1407.35 254.15L1405.64 249.5L1403.65 244.87L1401.38 240.27L1398.83 235.69L1396.03 231.14L1392.98 226.62L1389.68 222.14L1386.17 217.68L1382.44 213.27L1378.51 208.9L1374.41 204.57L1370.14 200.29" stroke="#666666" stroke-opacity="0.7"/>
<path d="M442.63 196.07L454.51 191.9L466.48 187.8L478.52 183.76L490.6 179.8" stroke="#666666" stroke-opacity="0.7"/>
<path d="M520.2 432.49L511.09 427.21L502.28 421.92L493.78 416.62L485.6 411.31L477.75 405.99L470.23 400.66L463.05 395.32L456.23 389.98L449.77 384.63L443.67 379.28L437.95 373.92L432.6 368.56L427.64 363.19L423.07 357.82L418.89 352.45L415.12 347.08L411.74 341.7L408.77 336.32L406.21 330.94L404.06 325.56L402.32 320.18L401 314.81L400.09 309.43L399.6 304.05L399.53 298.67L399.87 293.29L400.62 287.92L401.79 282.55L403.37 277.18L405.36 271.82L407.76 266.45L410.56 261.1L413.76 255.74L417.36 250.4L421.34 245.05L425.72 239.72L430.47 234.39L435.59 229.07L441.08 223.76L446.93 218.46L453.13 213.17L459.67 207.89L466.54 202.62L473.73 197.37L481.23 192.14L489.02 186.92L497.1 181.72L505.45 176.55L514.05 171.4L522.88 166.27L531.93 161.18L541.18 156.12L550.6 151.1" stroke="#666666" stroke-opacity="0.7"/>
<path d="M485.82 440.66L475.03 435.9L464.46 431.11L454.14 426.29L444.08 421.44L434.29 416.57L424.79 411.67L415.59 406.76L406.7 401.82L398.14 396.87L389.91 391.9L382.04 386.92L374.52 381.93L367.37 376.92L360.59 371.9L354.2 366.88L348.19 361.84L342.59 356.8L337.39 351.75L332.6 346.7L328.22 341.64L324.27 336.58L320.74 331.52L317.63 326.45" stroke="#666666" stroke-opacity="0.7"/>
<path d="M1488.9 321.38L1486.38 316.32L1483.42 311.25L1480.04 306.19L1476.24 301.13L1472.01 296.07L1467.37 291.01L1462.32 285.96L1456.86 280.92L1451.01 275.88L1444.76 270.85L1438.13 265.83L1431.12 260.82L1423.74 255.82L1415.99 250.84L1407.9 245.86L1399.47 240.91L1390.72 235.96L1381.64 231.04L1372.26 226.14L1362.59 221.26L1352.63 216.4L1342.42 211.57L1331.96 206.77L1321.27 202L1310.36 197.26L1299.26 192.57L1287.98 187.91L1276.54 183.3L1264.97 178.74L1253.28 174.23L1241.51 169.79L1229.67 165.41L1217.8 161.1" stroke="#666666" stroke-opacity="0.7"/>
<path d="M537.13 423.99L528.47 420.16L519.9 416.27L511.45 412.33L503.12 408.35L494.93 404.33L486.89 400.27L479.01 396.17L471.31 392.04L463.79 387.88L456.46 383.69L449.34 379.48L442.43 375.24L435.74 370.98L429.28 366.7L423.06 362.4L417.08 358.09L411.36 353.76L405.89 349.42L400.69 345.08L395.76 340.72L391.1 336.35L386.72 331.98L382.62 327.61L378.81 323.23L375.28 318.85L372.04 314.48L369.1 310.1L366.44 305.73L364.08 301.36L362 297L360.22 292.65L358.73 288.31L357.52 283.98L356.6 279.67L355.96 275.36L355.59 271.08L355.5 266.82L355.66 262.57L356.09 258.35L356.77 254.16L357.7 249.99" stroke="#666666" stroke-opacity="0.7"/>
<path d="M1440.35 245.85L1431.44 241.74L1422.32 237.67L1413 233.64L1403.51 229.65L1393.85 225.7L1384.05 221.8L1374.11 217.95L1364.06 214.16L1353.92 210.42L1343.7 206.75L1333.42 203.15L1323.11 199.62L1312.78 196.16L1302.46 192.79L1292.17 189.51L1281.92 186.32L1271.75 183.23L1261.67 180.25L1251.71 177.38L1241.88 174.63L1232.22 172.01L1222.74 169.53L1213.46 167.19L1204.4 165" stroke="#666666" stroke-opacity="0.7"/>
<path d="M1335.7 326.65L1338.29 321.57L1340.55 316.49L1342.48 311.41L1344.1 306.33L1345.38 301.25L1346.34 296.18L1346.98 291.11L1347.28 286.05L1347.27 280.99L1346.93 275.94L1346.27 270.89L1345.3 265.86L1344.01 260.83L1342.41 255.82L1340.5 250.81L1338.3 245.82L1335.79 240.85L1333 235.89L1329.93 230.95L1326.58 226.03L1322.96 221.13L1319.09 216.25L1314.97 211.4L1310.62 206.58L1306.04 201.79L1301.26 197.03L1296.28 192.31L1291.12 187.63L1285.79 183L1280.33 178.41L1274.74 173.88L1269.06 169.41L1263.3 165" stroke="#666666" stroke-opacity="0.7"/>
<path d="M958.69 202.66L959.38 197.39L960.03 192.14L960.64 186.9L961.2 181.68L961.73 176.48L962.22 171.31L962.67 166.16L963.08 161.04L963.47 155.95L963.82 150.9L964.14 145.9L964.44 140.94L964.73 136.03L965 131.18L965.27 126.41L965.54 121.71L965.84 117.11L966.16 112.62L966.54 108.26L967 104.04L967.56 100.01L968.28 96.17L969.18 92.58L970.34 89.28L971.84 86.3L973.75 83.71L976.19 81.56L979.28 79.91L983.12 78.79L987.85 78.25L993.53 78.3L1000.25 78.94L1008.01 80.15L1016.8 81.9L1026.55 84.13L1037.18 86.79L1048.6 89.83L1060.7 93.18L1073.38 96.82L1086.54 100.69L1100.09 104.76L1113.95 109L1128.05 113.39L1142.32 117.9L1156.71 122.52L1171.16 127.23L1185.63 132.01L1200.08 136.87L1214.46 141.79L1228.76 146.76L1242.92 151.77L1256.93 156.83L1270.77 161.92L1284.4 167.05L1297.8 172.2" stroke="#666666" stroke-opacity="0.7"/>
<path d="M609.35 422.96L601.74 419.86L594.14 416.69L586.58 413.45L579.06 410.15L571.59 406.8L564.18 403.4L556.84 399.94L549.58 396.44L542.41 392.89L535.34 389.3L528.38 385.68L521.54 382.02L514.82 378.33L508.23 374.6L501.79 370.85L495.49 367.08L489.34 363.28L483.36 359.46L477.54 355.62L471.89 351.76L466.43 347.89L461.15 344.01L456.05 340.12L451.15 336.21L446.44 332.3L441.93 328.39L437.62 324.47L433.52 320.54L429.63 316.62L425.94 312.7L422.46 308.79L419.19 304.87L416.13 300.97L413.28 297.08L410.64 293.19L408.21 289.32L405.98 285.46L403.95 281.63L402.12 277.8L400.48 274.01L399.04 270.23L397.78 266.48L396.7 262.75L395.79 259.06L395.05 255.4L394.47 251.78L394.04 248.19L393.75 244.64L393.58 241.14L393.54 237.68L393.6 234.27L393.76 230.92L394 227.62L394.31 224.38" stroke="#666666" stroke-opacity="0.7"/>
<path d="M1406.73 221.21L1397.09 218.1L1387.44 215.07L1377.79 212.11L1368.15 209.23L1358.55 206.44L1349 203.73L1339.52 201.12L1330.14 198.61L1320.86 196.2L1311.7 193.9" stroke="#666666" stroke-opacity="0.7"/>
<path d="M699.56 371.32L694.08 367.96L688.67 364.57L683.32 361.16L678.04 357.72L672.83 354.27L667.69 350.79L662.63 347.3L657.65 343.79L652.76 340.27L647.95 336.74L643.24 333.2L638.62 329.65L634.09 326.1L629.66 322.54L625.32 318.98L621.09 315.43L616.96 311.88L612.93 308.33L609.01 304.79L605.19 301.25L601.47 297.73L597.86 294.22L594.35 290.72L590.94 287.25L587.64 283.78L584.44 280.34L581.33 276.93L578.32 273.54L575.41 270.17L572.58 266.84L569.84 263.53L567.19 260.27L564.61 257.04L562.11 253.84L559.68 250.7L557.31 247.59L555 244.54L552.74 241.53L550.52 238.58L548.34 235.69L546.18 232.86L544.05 230.09L541.92 227.39L539.79 224.76L537.65 222.2L535.49 219.73L533.29 217.33L531.05 215.02L528.76 212.79L526.39 210.66L523.94 208.63L521.4 206.7L518.74 204.87L515.97 203.14L513.06 201.53L509.99 200.03L506.77 198.65L503.37 197.4L499.78 196.26L495.99 195.25L491.99 194.38L487.76 193.63L483.3 193.02L478.6 192.54L473.65 192.2L468.44 191.99L462.97 191.92L457.24 192L451.23 192.2" stroke="#666666" stroke-opacity="0.7"/>
<path d="M1354.23 192.55L1349.6 193.03L1345.23 193.65L1341.1 194.4" stroke="#666666" stroke-opacity="0.7"/>
<path d="M662.9 312.97L660.24 308.23L657.74 303.5L655.39 298.76L653.2 294.04L651.16 289.32L649.29 284.61L647.57 279.91L646.01 275.22L644.61 270.54L643.36 265.88L642.27 261.23L641.32 256.6L640.53 251.99L639.89 247.4L639.39 242.83L639.03 238.29L638.81 233.78L638.72 229.29L638.75 224.84L638.91 220.42L639.18 216.04L639.55 211.7L640.03 207.41L640.59 203.17L641.24 198.98L641.95 194.84L642.72 190.77L643.54 186.76L644.38 182.83L645.24 178.97L646.09 175.21L646.92 171.53L647.71 167.95L648.43 164.48L649.06 161.13L649.57 157.9L649.94 154.81L650.14 151.86L650.12 149.08L649.86 146.45L649.32 144.01L648.46 141.76L647.25 139.72L645.64 137.88L643.59 136.28L641.07 134.91L638.03 133.78L634.44 132.9L630.28 132.29L625.51 131.93L620.12 131.85L614.08 132.03L607.4 132.47L600.06 133.18L592.09 134.15L583.48 135.36" stroke="#666666" stroke-opacity="0.7"/>
<path d="M1225.17 136.82L1224.16 138.51L1223.68 140.42L1223.69 142.54L1224.13 144.86L1224.96 147.36L1226.13 150.04L1227.6 152.89L1229.32 155.89L1231.26 159.03L1233.37 162.3L1235.62 165.69L1237.98 169.2L1240.41 172.82L1242.9 176.53L1245.4 180.33L1247.9 184.21L1250.37 188.17L1252.8 192.2" stroke="#666666" stroke-opacity="0.7"/>
<path d="M572.3 388.26L565.82 386.53L559.34 384.76L552.85 382.93L546.37 381.05L539.88 379.11L533.41 377.13L526.95 375.11L520.51 373.04L514.1 370.93L507.71 368.78L501.35 366.59L495.03 364.37L488.76 362.11L482.52 359.82L476.34 357.5L470.21 355.15L464.14 352.78L458.13 350.38L452.18 347.96L446.3 345.52L440.5 343.07L434.77 340.59L429.12 338.1L423.55 335.6L418.07 333.09L412.67 330.57L407.36 328.04L402.14 325.51L397.01 322.97L391.97 320.43L387.03 317.89L382.19 315.35L377.44 312.82L372.78 310.29L368.22 307.77L363.76 305.26L359.39 302.76L355.11 300.27L350.93 297.8L346.83 295.34L342.82 292.9L338.9 290.49L335.06 288.09L331.3 285.72L327.62 283.37" stroke="#666666" stroke-opacity="0.7"/>
<path d="M1471.9 281.06L1465.26 278.77L1458.56 276.51L1451.8 274.29L1444.99 272.1L1438.14 269.95L1431.25 267.85L1424.33 265.78L1417.38 263.76L1410.41 261.78L1403.43 259.85L1396.44 257.97L1389.45 256.14L1382.47 254.37L1375.5 252.65L1368.54 250.99L1361.61 249.39L1354.71 247.85L1347.84 246.38L1341.01 244.97L1334.22 243.63L1327.48 242.36L1320.8 241.16L1314.17 240.03L1307.6 238.98L1301.1 238" stroke="#666666" stroke-opacity="0.7"/>
<path d="M546.2 442.43L536.83 437.11L527.74 431.79L518.94 426.45L510.44 421.1L502.24 415.74L494.37 410.38L486.83 405L479.63 399.62L472.77 394.24L466.26 388.85L460.11 383.46L454.33 378.06L448.92 372.65L443.88 367.25L439.23 361.84L434.96 356.43L431.08 351.02L427.6 345.6L424.52 340.18L421.84 334.77L419.56 329.35L417.69 323.93L416.22 318.51L415.17 313.09L414.52 307.67L414.28 302.26L414.46 296.84L415.04 291.42L416.03 286.01L417.43 280.6L419.23 275.19L421.44 269.78L424.04 264.38L427.05 258.98L430.44 253.58L434.23 248.19L438.4 242.81L442.94 237.43L447.86 232.05L453.15 226.68L458.8 221.33L464.8 215.97L471.14 210.63L477.82 205.3L484.83 199.98L492.15 194.67L499.78 189.38L507.71 184.1L515.91 178.84L524.38 173.6L533.11 168.38L542.07 163.18L551.25 158.01L560.63 152.87L570.19 147.77L579.9 142.7L589.74 137.68L599.67 132.71L609.67 127.79L619.69 122.95L629.69 118.18" stroke="#666666" stroke-opacity="0.7"/>
<path d="M1163.89 113.51L1147.84 108.94L1132 104.5" stroke="#666666" stroke-opacity="0.7"/>
<path d="M604.45 441.34L596.11 438.32L587.75 435.21L579.39 432.03L571.03 428.76L562.69 425.43L554.38 422.03L546.12 418.56L537.92 415.04L529.79 411.46L521.75 407.83L513.8 404.14L505.96 400.42L498.24 396.65L490.64 392.84L483.19 389L475.88 385.12L468.74 381.21L461.76 377.27L454.97 373.31L448.35 369.32L441.93 365.31L435.72 361.28L429.71 357.23L423.91 353.17L418.34 349.09L412.99 345L407.87 340.9L402.99 336.79L398.35 332.67L393.96 328.55L389.81 324.43L385.91 320.3L382.26 316.18L378.87 312.05L375.73 307.93L372.84 303.82L370.21 299.71L367.84 295.61L365.71 291.52L363.84 287.44L362.21 283.38L360.83 279.33L359.69 275.3L358.79 271.3L358.12 267.31L357.67 263.35L357.44 259.41L357.43 255.51L357.62 251.63" stroke="#666666" stroke-opacity="0.7"/>
<path d="M1444.18 247.79L1435.45 243.99L1426.55 240.22L1417.5 236.5" stroke="#666666" stroke-opacity="0.7"/>
<path d="M1061.6 79.6L1060.37 79.44L1059.18 79.29L1058.01 79.15L1056.88 79.02L1055.77 78.9L1054.7 78.79L1053.66 78.7L1052.65 78.61L1051.67 78.54L1050.73 78.48L1049.81 78.42L1048.93 78.38L1048.08 78.35L1047.26 78.33L1046.47 78.33L1045.71 78.33L1044.98 78.35L1044.28 78.37L1043.62 78.41L1042.98 78.46L1042.37 78.52L1041.8 78.59L1041.25 78.68L1040.73 78.77L1040.24 78.88L1039.78 78.99L1039.34 79.12L1038.93 79.26L1038.55 79.4L1038.2 79.56L1037.87 79.73L1037.57 79.91L1037.3 80.1L1037.05 80.3L1036.82 80.51L1036.62 80.73L1036.44 80.96L1036.29 81.2L1036.16 81.45L1036.05 81.71L1035.96 81.98L1035.89 82.25L1035.85 82.54L1035.82 82.84L1035.82 83.14L1035.83 83.45L1035.87 83.77L1035.92 84.1L1035.99 84.44L1036.08 84.79L1036.19 85.14L1036.31 85.5L1036.45 85.87L1036.6 86.25L1036.77 86.63L1036.96 87.02L1037.16 87.42L1037.37 87.82L1037.6 88.23L1037.84 88.65L1038.1 89.08L1038.36 89.51L1038.64 89.95L1038.94 90.39L1039.24 90.84L1039.55 91.29L1039.88 91.75L1040.22 92.22L1040.56 92.69L1040.92 93.17L1041.29 93.65L1041.66 94.14L1042.05 94.63L1042.44 95.13L1042.84 95.63L1043.25 96.14L1043.67 96.65L1044.1 97.17L1044.53 97.69L1044.97 98.22L1045.42 98.75L1045.87 99.28L1046.33 99.82L1046.8 100.36L1047.27 100.9L1047.75 101.45L1048.23 102.01L1048.72 102.56L1049.21 103.12L1049.71 103.69L1050.22 104.25L1050.73 104.82L1051.24 105.4L1051.76 105.97L1052.28 106.55L1052.8 107.13L1053.33 107.72L1053.86 108.31L1054.4 108.9" stroke="#81d34d"/>
<path d="M1067.6 82.4L1067 82.45L1066.42 82.51L1065.87 82.58L1065.35 82.65L1064.86 82.74L1064.39 82.84L1063.95 82.94L1063.54 83.06L1063.15 83.18L1062.79 83.32L1062.45 83.46L1062.14 83.62L1061.85 83.78L1061.59 83.95L1061.36 84.13L1061.14 84.32L1060.95 84.52L1060.79 84.72L1060.64 84.94L1060.52 85.16L1060.42 85.39L1060.34 85.64L1060.28 85.88L1060.25 86.14L1060.23 86.41L1060.24 86.68L1060.26 86.96L1060.3 87.25L1060.36 87.54L1060.44 87.85L1060.54 88.16L1060.66 88.47L1060.79 88.8L1060.94 89.13L1061.1 89.47L1061.29 89.81L1061.48 90.17L1061.7 90.53L1061.93 90.89L1062.17 91.26L1062.43 91.64L1062.7 92.02L1062.98 92.41L1063.28 92.81L1063.59 93.21L1063.91 93.62L1064.25 94.03L1064.6 94.45L1064.95 94.88L1065.32 95.3L1065.71 95.74L1066.1 96.18L1066.5 96.62L1066.91 97.07L1067.33 97.53L1067.77 97.99L1068.21 98.45L1068.66 98.92L1069.12 99.39L1069.58 99.87L1070.06 100.35L1070.54 100.83L1071.03 101.32L1071.53 101.82L1072.04 102.31L1072.55 102.82L1073.07 103.32L1073.6 103.83L1074.13 104.34L1074.67 104.86L1075.21 105.38L1075.76 105.9L1076.32 106.43L1076.88 106.96L1077.45 107.49L1078.02 108.03L1078.6 108.56L1079.18 109.11L1079.76 109.65L1080.35 110.2L1080.95 110.75L1081.55 111.3L1082.15 111.86L1082.75 112.42L1083.36 112.98L1083.98 113.55L1084.59 114.11L1085.21 114.68L1085.84 115.26L1086.46 115.83L1087.09 116.41L1087.72 116.99L1088.35 117.57L1088.99 118.15L1089.63 118.74L1090.27 119.32L1090.91 119.91L1091.55 120.51L1092.2 121.1" stroke="#81d34d"/>
<path d="M1105.6 94L1106.1 94.67L1106.68 95.36L1107.34 96.09L1108.07 96.84L1108.87 97.61L1109.73 98.42L1110.66 99.24L1111.65 100.09L1112.7 100.96L1113.8 101.86L1114.95 102.77L1116.15 103.71L1117.4 104.66L1118.69 105.64L1120.02 106.63L1121.39 107.64L1122.8 108.67L1124.24 109.71L1125.72 110.77L1127.22 111.84L1128.75 112.93L1130.31 114.03L1131.89 115.15L1133.5 116.28L1135.13 117.42L1136.77 118.57L1138.44 119.73L1140.12 120.91L1141.82 122.09L1143.53 123.29L1145.25 124.5L1146.98 125.71L1148.73 126.94L1150.48 128.17L1152.24 129.41L1154.01 130.66L1155.79 131.92L1157.56 133.19L1159.35 134.46L1161.13 135.74L1162.92 137.03L1164.71 138.32L1166.5 139.62L1168.29 140.93L1170.08 142.24L1171.87 143.56L1173.65 144.88L1175.43 146.21L1177.21 147.55L1178.99 148.89L1180.75 150.23L1182.52 151.58L1184.28 152.93L1186.03 154.29L1187.77 155.65L1189.51 157.02L1191.23 158.39L1192.95 159.76L1194.66 161.14L1196.36 162.52L1198.06 163.9L1199.74 165.29L1201.41 166.68L1203.07 168.08L1204.71 169.47L1206.35 170.87L1207.97 172.28L1209.58 173.68L1211.18 175.09L1212.76 176.5L1214.33 177.92L1215.89 179.33L1217.43 180.75L1218.96 182.17L1220.47 183.6L1221.97 185.02L1223.45 186.45L1224.92 187.88L1226.37 189.31L1227.81 190.75L1229.23 192.18L1230.63 193.62L1232.01 195.06L1233.38 196.5L1234.73 197.94L1236.06 199.39L1237.38 200.83L1238.68 202.28L1239.95 203.73L1241.21 205.18L1242.46 206.63L1243.68 208.09L1244.88 209.54L1246.07 211L1247.23 212.46L1248.38 213.92L1249.51 215.38L1250.61 216.84L1251.7 218.3" stroke="#81d34d"/>
<path d="M1101.1 92.4L1102.43 93.36L1103.84 94.35L1105.33 95.38L1106.89 96.42L1108.52 97.5L1110.21 98.6L1111.96 99.73L1113.77 100.88L1115.63 102.05L1117.54 103.24L1119.49 104.45L1121.49 105.68L1123.52 106.93L1125.59 108.2L1127.69 109.48L1129.82 110.78L1131.98 112.1L1134.16 113.43L1136.36 114.77L1138.59 116.12L1140.83 117.49L1143.09 118.87L1145.36 120.27L1147.65 121.67L1149.95 123.08L1152.25 124.51L1154.57 125.94L1156.89 127.38L1159.21 128.83L1161.54 130.29L1163.87 131.76L1166.2 133.23L1168.53 134.72L1170.86 136.21L1173.19 137.7L1175.52 139.21L1177.84 140.71L1180.15 142.23L1182.46 143.75L1184.76 145.28L1187.05 146.81L1189.34 148.35L1191.61 149.89L1193.88 151.43L1196.13 152.99L1198.37 154.54L1200.6 156.1L1202.82 157.66L1205.02 159.23L1207.21 160.8L1209.39 162.38L1211.55 163.96L1213.69 165.54L1215.81 167.13L1217.92 168.71L1220.02 170.31L1222.09 171.9L1224.15 173.5L1226.18 175.1L1228.2 176.7L1230.2 178.31L1232.18 179.91L1234.14 181.52L1236.07 183.14L1237.99 184.75L1239.88 186.37L1241.75 187.99L1243.6 189.61L1245.43 191.23L1247.23 192.86L1249.01 194.48L1250.77 196.11L1252.5 197.74L1254.21 199.38L1255.9 201.01L1257.55 202.64L1259.19 204.28L1260.8 205.92L1262.38 207.56L1263.94 209.2L1265.47 210.84L1266.97 212.49L1268.45 214.13L1269.9 215.78L1271.32 217.43L1272.72 219.08L1274.09 220.73L1275.43 222.38L1276.74 224.03L1278.03 225.68L1279.29 227.34L1280.51 228.99L1281.71 230.65L1282.88 232.3L1284.03 233.96L1285.14 235.62L1286.22 237.28L1287.28 238.94L1288.3 240.6" stroke="#81d34d"/>
<path d="M1095.8 91.8L1098.22 92.8L1100.65 93.79L1103.08 94.79L1105.51 95.8L1107.94 96.8L1110.37 97.81L1112.8 98.82L1115.22 99.83L1117.65 100.84L1120.08 101.85L1122.5 102.87L1124.92 103.89L1127.34 104.91L1129.76 105.93L1132.18 106.95L1134.59 107.97L1137 109L1139.4 110.03L1141.8 111.05L1144.2 112.08L1146.59 113.11L1148.98 114.15L1151.36 115.18L1153.74 116.21L1156.12 117.25L1158.49 118.28L1160.85 119.32L1163.21 120.36L1165.56 121.39L1167.91 122.43L1170.25 123.47L1172.58 124.52L1174.91 125.56L1177.23 126.6L1179.54 127.64L1181.85 128.69L1184.15 129.73L1186.44 130.78L1188.73 131.82L1191 132.87L1193.27 133.92L1195.54 134.96L1197.79 136.01L1200.04 137.06L1202.28 138.11L1204.51 139.16L1206.73 140.21L1208.94 141.26L1211.15 142.31L1213.35 143.37L1215.53 144.42L1217.71 145.47L1219.88 146.52L1222.04 147.58L1224.19 148.63L1226.34 149.69L1228.47 150.74L1230.59 151.8L1232.71 152.85L1234.81 153.91L1236.9 154.96L1238.99 156.02L1241.06 157.08L1243.13 158.14L1245.18 159.19L1247.22 160.25L1249.25 161.31L1251.28 162.37L1253.29 163.43L1255.29 164.49L1257.28 165.55L1259.26 166.61L1261.23 167.67L1263.18 168.73L1265.13 169.79L1267.07 170.85L1268.99 171.91L1270.9 172.97L1272.8 174.03L1274.69 175.09L1276.57 176.15L1278.44 177.22L1280.29 178.28L1282.13 179.34L1283.96 180.4L1285.78 181.47L1287.59 182.53L1289.38 183.59L1291.16 184.66L1292.93 185.72L1294.69 186.78L1296.44 187.85L1298.17 188.91L1299.89 189.98L1301.6 191.04L1303.29 192.11L1304.97 193.17L1306.64 194.23L1308.3 195.3" stroke="#81d34d"/>
<path d="M1103.5 93.2L1106.44 94.3L1109.38 95.39L1112.31 96.49L1115.24 97.59L1118.16 98.69L1121.08 99.79L1123.99 100.89L1126.9 101.99L1129.8 103.09L1132.69 104.19L1135.58 105.3L1138.46 106.4L1141.33 107.51L1144.2 108.61L1147.06 109.72L1149.91 110.82L1152.75 111.93L1155.59 113.03L1158.42 114.14L1161.24 115.25L1164.05 116.35L1166.86 117.46L1169.65 118.57L1172.44 119.68L1175.22 120.79L1177.99 121.9L1180.75 123.01L1183.51 124.12L1186.25 125.23L1188.98 126.34L1191.71 127.45L1194.42 128.56L1197.13 129.67L1199.82 130.78L1202.51 131.89L1205.18 133L1207.85 134.11L1210.5 135.23L1213.15 136.34L1215.78 137.45L1218.41 138.56L1221.02 139.68L1223.62 140.79L1226.21 141.9L1228.79 143.02L1231.36 144.13L1233.91 145.24L1236.46 146.36L1238.99 147.47L1241.52 148.59L1244.03 149.7L1246.53 150.82L1249.01 151.93L1251.49 153.04L1253.95 154.16L1256.4 155.27L1258.84 156.39L1261.27 157.5L1263.68 158.62L1266.08 159.74L1268.47 160.85L1270.84 161.97L1273.2 163.08L1275.55 164.2L1277.89 165.31L1280.21 166.43L1282.52 167.55L1284.82 168.66L1287.1 169.78L1289.37 170.9L1291.63 172.01L1293.87 173.13L1296.09 174.24L1298.31 175.36L1300.51 176.48L1302.69 177.6L1304.87 178.71L1307.02 179.83L1309.17 180.95L1311.3 182.06L1313.41 183.18L1315.51 184.3L1317.6 185.42L1319.67 186.53L1321.72 187.65L1323.76 188.77L1325.79 189.89L1327.8 191L1329.79 192.12L1331.77 193.24L1333.74 194.36L1335.69 195.47L1337.62 196.59L1339.54 197.71L1341.44 198.83L1343.33 199.95L1345.2 201.06L1347.06 202.18L1348.9 203.3" stroke="#81d34d"/>
<path d="M678 105.2L674.51 106.17L671 107.15L667.47 108.14L663.93 109.13L660.38 110.14L656.81 111.15L653.22 112.17L649.63 113.19L646.02 114.23L642.4 115.27L638.78 116.31L635.14 117.37L631.5 118.42L627.85 119.49L624.2 120.56L620.54 121.63L616.87 122.71L613.2 123.8L609.53 124.89L605.85 125.98" stroke="#81d34d"/>
<path d="M1201.32 127.08L1203.59 128.19L1205.87 129.3L1208.15 130.41L1210.42 131.52L1212.7 132.64L1214.97 133.77L1217.24 134.9L1219.51 136.03L1221.77 137.16L1224.04 138.3L1226.29 139.44L1228.55 140.58L1230.8 141.73L1233.04 142.88L1235.28 144.03L1237.51 145.19L1239.74 146.35L1241.96 147.51L1244.17 148.67L1246.38 149.83L1248.57 151L1250.76 152.17L1252.94 153.34L1255.11 154.52L1257.28 155.7L1259.43 156.87L1261.57 158.05L1263.71 159.24L1265.83 160.42L1267.94 161.61L1270.05 162.8L1272.14 163.99L1274.22 165.18L1276.29 166.37L1278.34 167.56L1280.39 168.76L1282.42 169.96L1284.44 171.16L1286.44 172.36L1288.44 173.56L1290.42 174.76L1292.39 175.97L1294.34 177.17L1296.28 178.38L1298.2 179.59L1300.12 180.8L1302.01 182.01L1303.9 183.22L1305.76 184.44L1307.62 185.65L1309.45 186.87L1311.28 188.08L1313.08 189.3L1314.88 190.52L1316.65 191.74L1318.41 192.96L1320.16 194.18L1321.88 195.4L1323.59 196.62L1325.29 197.85L1326.97 199.07L1328.63 200.3L1330.27 201.52L1331.9 202.75L1333.51 203.98L1335.1 205.21L1336.67 206.44L1338.23 207.67L1339.77 208.9L1341.29 210.13L1342.79 211.36L1344.28 212.59L1345.74 213.82L1347.19 215.06L1348.62 216.29L1350.03 217.53L1351.43 218.76L1352.8 220" stroke="#81d34d"/>
<path d="M678.6 105.6L674.93 106.57L671.23 107.55L667.49 108.54L663.74 109.55L659.95 110.57L656.14 111.6L652.31 112.65L648.46 113.7L644.59 114.76L640.69 115.84L636.78 116.92L632.86 118.01L628.92 119.12L624.96 120.23L620.99 121.35L617.01 122.47L613.02 123.61L609.02 124.75" stroke="#81d34d"/>
<path d="M1197.76 125.9L1200 127.06L1202.26 128.22L1204.51 129.39L1206.78 130.57L1209.05 131.75L1211.32 132.94L1213.59 134.14L1215.87 135.34L1218.14 136.54L1220.42 137.75L1222.69 138.97L1224.96 140.19L1227.23 141.42L1229.5 142.65L1231.77 143.88L1234.03 145.12L1236.28 146.36L1238.53 147.61L1240.78 148.86L1243.02 150.11L1245.25 151.37L1247.47 152.63L1249.69 153.9L1251.9 155.16L1254.1 156.43L1256.29 157.71L1258.47 158.99L1260.64 160.27L1262.8 161.55L1264.95 162.83L1267.08 164.12L1269.21 165.41L1271.32 166.71L1273.42 168L1275.51 169.3L1277.58 170.6L1279.65 171.91L1281.69 173.21L1283.73 174.52L1285.74 175.83L1287.75 177.14L1289.74 178.45L1291.71 179.77L1293.67 181.08L1295.61 182.4L1297.53 183.72L1299.44 185.05L1301.33 186.37L1303.21 187.69L1305.07 189.02L1306.91 190.35L1308.73 191.68L1310.53 193.01L1312.32 194.35L1314.09 195.68L1315.83 197.02L1317.56 198.35L1319.28 199.69L1320.97 201.03L1322.64 202.37L1324.29 203.71L1325.92 205.06L1327.54 206.4L1329.13 207.75L1330.7 209.09L1332.25 210.44L1333.78 211.79L1335.29 213.14L1336.78 214.49L1338.24 215.84L1339.69 217.19L1341.11 218.54L1342.51 219.9L1343.89 221.25L1345.25 222.61L1346.58 223.97L1347.9 225.32L1349.19 226.68L1350.46 228.04L1351.7 229.4" stroke="#81d34d"/>
<path d="M1110.2 96.7L1113.49 98.04L1116.77 99.39L1120.06 100.75L1123.34 102.1L1126.62 103.46L1129.9 104.82L1133.17 106.19L1136.43 107.55L1139.69 108.92L1142.95 110.29L1146.2 111.67L1149.44 113.04L1152.67 114.42L1155.89 115.8L1159.11 117.19L1162.31 118.57L1165.51 119.96L1168.69 121.34L1171.87 122.73L1175.03 124.12L1178.19 125.51L1181.33 126.91L1184.45 128.3L1187.57 129.7L1190.67 131.1L1193.76 132.49L1196.84 133.89L1199.9 135.29L1202.95 136.7L1205.98 138.1L1209 139.5L1212 140.91L1214.99 142.31L1217.96 143.72L1220.92 145.12L1223.86 146.53L1226.78 147.94L1229.69 149.35L1232.58 150.76L1235.45 152.17L1238.31 153.58L1241.15 154.99L1243.96 156.41L1246.77 157.82L1249.55 159.23L1252.31 160.65L1255.06 162.06L1257.78 163.48L1260.49 164.89L1263.18 166.31L1265.84 167.73L1268.49 169.14L1271.12 170.56L1273.73 171.98L1276.31 173.4L1278.88 174.82L1281.42 176.24L1283.95 177.66L1286.45 179.08L1288.93 180.5L1291.39 181.92L1293.82 183.34L1296.24 184.76L1298.63 186.18L1301 187.61L1303.35 189.03L1305.68 190.45L1307.98 191.88L1310.26 193.3L1312.51 194.72L1314.75 196.15L1316.96 197.57L1319.14 198.99L1321.3 200.42L1323.44 201.84L1325.55 203.27L1327.64 204.7L1329.71 206.12L1331.75 207.55L1333.76 208.97L1335.75 210.4L1337.72 211.83L1339.66 213.25L1341.58 214.68L1343.47 216.11L1345.33 217.53L1347.17 218.96L1348.98 220.39L1350.77 221.82L1352.53 223.24L1354.27 224.67L1355.98 226.1L1357.66 227.53L1359.32 228.96L1360.95 230.38L1362.55 231.81L1364.13 233.24L1365.68 234.67L1367.2 236.1" stroke="#81d34d"/>
<path d="M1094.58 90.93L1099.2 92.46L1103.81 93.99L1108.4 95.52L1112.99 97.05L1117.56 98.58L1122.12 100.11L1126.66 101.64L1131.19 103.17L1135.71 104.7L1140.21 106.23L1144.69 107.76L1149.16 109.3L1153.62 110.83L1158.06 112.36L1162.48 113.9L1166.89 115.43L1171.28 116.97L1175.65 118.5L1180 120.03L1184.33 121.57L1188.65 123.1L1192.95 124.64L1197.23 126.18L1201.49 127.71L1205.73 129.25L1209.94 130.78L1214.14 132.32L1218.32 133.86L1222.48 135.39L1226.61 136.93L1230.73 138.46L1234.82 140L1238.89 141.54L1242.94 143.07L1246.96 144.61L1250.97 146.15L1254.94 147.69L1258.9 149.22L1262.83 150.76L1266.74 152.3L1270.62 153.84L1274.48 155.37" stroke="#81d34d"/>
<path d="M526.29 156.91L522.71 158.45L519.15 159.99L515.61 161.53L512.1 163.06L508.62 164.6L505.16 166.14L501.73 167.68L498.33 169.22L494.95 170.76L491.6 172.29L488.28 173.83L484.99 175.37L481.72 176.91L478.49 178.45L475.28 179.99L472.1 181.53L468.95 183.06L465.83 184.6L462.74 186.14L459.68 187.68L456.65 189.22L453.64 190.76L450.67 192.3L447.73 193.84L444.82 195.38L441.95 196.91L439.1 198.45L436.28 199.99L433.5 201.53L430.75 203.07L428.03 204.61L425.34 206.15L422.68 207.69L420.06 209.23L417.47 210.77L414.91 212.31L412.38 213.85L409.89 215.39L407.43 216.93L405.01 218.47L402.62 220L400.26 221.54L397.94 223.08L395.65 224.62L393.39 226.16L391.17 227.7L388.99 229.24L386.83 230.78L384.72 232.32L382.64 233.86L380.59 235.4L378.58 236.94L376.61 238.48L374.67 240.02L372.77 241.56L370.9 243.1" stroke="#81d34d"/>
<path d="M507.2 308.3L505.96 305.9L504.78 303.5L503.66 301.1L502.62 298.7L501.63 296.31L500.72 293.91L499.87 291.52L499.08 289.13L498.36 286.74L497.7 284.36L497.11 281.97L496.58 279.6L496.12 277.22L495.72 274.85L495.38 272.48L495.11 270.11L494.9 267.75L494.75 265.4L494.66 263.04L494.64 260.7L494.67 258.35L494.76 256.02L494.92 253.69L495.13 251.36L495.4 249.04L495.73 246.73L496.11 244.42L496.55 242.12L497.04 239.83L497.58 237.55L498.18 235.27L498.83 233.01L499.53 230.75L500.27 228.5L501.07 226.26L501.9 224.03L502.79 221.81L503.71 219.6L504.68 217.4L505.68 215.22L506.73 213.04L507.8 210.88L508.92 208.73L510.06 206.6L511.24 204.48L512.44 202.37L513.67 200.28L514.92 198.21L516.19 196.16L517.48 194.12L518.78 192.1L520.1 190.09L521.43 188.11L522.76 186.15L524.1 184.21L525.43 182.29L526.77 180.4L528.09 178.53L529.41 176.68L530.71 174.86L532 173.07L533.26 171.3L534.5 169.56L535.7 167.86L536.87 166.18L538 164.54L539.08 162.93L540.12 161.36L541.09 159.82L542.01 158.32L542.86 156.86L543.64 155.44L544.35 154.06L544.97 152.73L545.5 151.44L545.93 150.19L546.26 149" stroke="#25858e"/>
<path d="M1253.9 147.85L1248.49 146.75L1243.2 145.7L1238.03 144.71L1232.99 143.77L1228.07 142.89L1223.29 142.06L1218.65 141.29L1214.14 140.58L1209.77 139.94L1205.55 139.35L1201.48 138.83L1197.55 138.37L1193.77 137.97L1190.14 137.65L1186.66 137.38L1183.33 137.18L1180.15 137.05L1177.12 136.99L1174.23 136.99L1171.49 137.06L1168.9 137.2" stroke="#25858e"/>
<path d="M518.7 300.5L517.13 298.03L515.63 295.56L514.2 293.1L512.83 290.64L511.53 288.19L510.29 285.74L509.12 283.29L508.01 280.85L506.97 278.41L505.99 275.98L505.08 273.56L504.23 271.14L503.44 268.73L502.71 266.33L502.04 263.94L501.44 261.55L500.89 259.17L500.4 256.81L499.97 254.45L499.59 252.1L499.27 249.76L499 247.44L498.78 245.12L498.61 242.82L498.5 240.53L498.42 238.26L498.4 236L498.41 233.75L498.47 231.52L498.57 229.3L498.7 227.1L498.87 224.92L499.08 222.76L499.31 220.61L499.57 218.48L499.86 216.38L500.17 214.29L500.49 212.23L500.84 210.19L501.2 208.18L501.56 206.18L501.94 204.22L502.31 202.28L502.69 200.37L503.06 198.48L503.43 196.63L503.78 194.81L504.11 193.01L504.42 191.26L504.71 189.53L504.97 187.84L505.19 186.19L505.38 184.57L505.52 183L505.61 181.46L505.64 179.96L505.62 178.51L505.52 177.1L505.36 175.74L505.12 174.42L504.8 173.16L504.39 171.94L503.89 170.77L503.29 169.65L502.58 168.59L501.76 167.58" stroke="#25858e"/>
<path d="M1298.68 166.63L1293.49 165.73L1288.42 164.9L1283.47 164.12L1278.66 163.4L1273.98 162.74L1269.43 162.15L1265.02 161.61L1260.75 161.15L1256.62 160.74L1252.63 160.4L1248.78 160.13L1245.07 159.92L1241.5 159.78L1238.07 159.71L1234.79 159.7L1231.63 159.76L1228.62 159.88L1225.74 160.08L1222.99 160.33L1220.37 160.66L1217.88 161.05L1215.51 161.5L1213.27 162.02L1211.13 162.6L1209.11 163.24L1207.2 163.94L1205.4 164.71L1203.7 165.53L1202.09 166.41L1200.57 167.35L1199.14 168.35L1197.8 169.4" stroke="#25858e"/>
<path d="M501.5 321.2L498.12 319.72L494.77 318.24L491.44 316.77L488.13 315.29L484.86 313.82L481.61 312.34L478.38 310.87L475.18 309.41L472.01 307.95L468.86 306.49L465.73 305.03L462.64 303.58L459.56 302.14L456.52 300.7L453.49 299.27L450.49 297.85L447.52 296.43L444.57 295.03L441.64 293.63L438.73 292.24L435.85 290.86L432.98 289.49L430.14 288.13L427.32 286.78L424.52 285.44L421.73 284.11L418.96 282.8L416.21 281.5L413.48 280.21L410.76 278.94L408.05 277.68L405.36 276.44L402.68 275.21L400.01 274L397.35 272.81L394.69 271.63L392.05 270.47L389.41 269.33L386.77 268.2L384.14 267.1L381.51 266.01L378.88 264.95L376.25 263.91L373.62 262.88L370.98 261.88L368.34 260.9L365.69 259.94L363.03 259.01L360.37 258.1L357.69 257.21L355 256.34L352.29 255.51" stroke="#25858e"/>
<path d="M1451.46 254.69L1447 253.9L1442.56 253.14L1438.14 252.4L1433.75 251.7L1429.37 251.01L1425.02 250.36L1420.69 249.73L1416.39 249.13L1412.11 248.56L1407.87 248.02L1403.65 247.51L1399.45 247.03L1395.29 246.57L1391.16 246.15L1387.06 245.76L1383 245.39L1378.96 245.06L1374.95 244.76L1370.98 244.49L1367.04 244.25L1363.14 244.05L1359.27 243.87L1355.43 243.73L1351.62 243.62L1347.85 243.54L1344.11 243.49L1340.4 243.47L1336.73 243.48L1333.09 243.53L1329.48 243.61L1325.9 243.72L1322.35 243.86L1318.84 244.04L1315.35 244.24L1311.9 244.48L1308.47 244.75L1305.07 245.05L1301.7 245.38L1298.35 245.74L1295.03 246.13L1291.73 246.55L1288.46 247L1285.22 247.48L1281.99 247.99L1278.78 248.53L1275.6 249.1" stroke="#25858e"/>
<path d="M510.5 307L509.45 306.25L508.41 305.51L507.37 304.77L506.34 304.02L505.32 303.28L504.3 302.54L503.29 301.8L502.28 301.06L501.29 300.32L500.29 299.58L499.31 298.84L498.32 298.1L497.35 297.37L496.38 296.63L495.42 295.9L494.46 295.16L493.51 294.43L492.56 293.7L491.63 292.97L490.69 292.24L489.76 291.51L488.84 290.78L487.93 290.06L487.02 289.33L486.11 288.61L485.22 287.89L484.32 287.17L483.44 286.45L482.55 285.73L481.68 285.01L480.81 284.3L479.94 283.58L479.08 282.87L478.23 282.16L477.38 281.45L476.54 280.74L475.7 280.04L474.87 279.33L474.04 278.63L473.22 277.93L472.4 277.23L471.59 276.53L470.78 275.84L469.98 275.14L469.18 274.45L468.39 273.76L467.6 273.07L466.82 272.39L466.04 271.7L465.27 271.02L464.5 270.34L463.73 269.66L462.97 268.99L462.22 268.32L461.46 267.64L460.71 266.98L459.97 266.31L459.23 265.65L458.49 264.98L457.76 264.33L457.03 263.67L456.31 263.01L455.58 262.36L454.87 261.71L454.15 261.07L453.44 260.42L452.73 259.78L452.03 259.14L451.32 258.51L450.62 257.87L449.93 257.24L449.23 256.62L448.54 255.99L447.85 255.37L447.16 254.75L446.48 254.14L445.8 253.52L445.12 252.92L444.44 252.31L443.76 251.71L443.09 251.11L442.42 250.51L441.74 249.92L441.07 249.33L440.4 248.74L439.74 248.16L439.07 247.58L438.4 247L437.74 246.43L437.07 245.86L436.41 245.29L435.75 244.73L435.08 244.17L434.42 243.62L433.76 243.07L433.09 242.52L432.43 241.98L431.76 241.44L431.1 240.9" stroke="#25858e"/>
<path d="M514.5 305.5L514.03 304.44L513.56 303.38L513.12 302.31L512.68 301.25L512.26 300.19L511.85 299.13L511.45 298.07L511.06 297.01L510.69 295.95L510.33 294.89L509.98 293.83L509.64 292.77L509.32 291.71L509.01 290.65L508.71 289.59L508.42 288.53L508.15 287.47L507.89 286.42L507.64 285.36L507.4 284.3L507.18 283.25L506.97 282.19L506.77 281.14L506.58 280.08L506.41 279.03L506.25 277.98L506.1 276.92L505.96 275.87L505.83 274.82L505.72 273.77L505.62 272.72L505.53 271.67L505.45 270.62L505.39 269.57L505.34 268.53L505.3 267.48L505.27 266.43L505.25 265.39L505.25 264.34L505.26 263.3L505.28 262.26L505.31 261.21L505.35 260.17L505.4 259.13L505.47 258.09L505.55 257.05L505.64 256.01L505.74 254.98L505.85 253.94L505.98 252.91L506.11 251.87L506.26 250.84L506.42 249.81L506.58 248.78L506.76 247.75L506.96 246.72L507.16 245.69L507.37 244.66L507.59 243.64L507.83 242.61L508.07 241.59L508.33 240.57L508.6 239.55L508.87 238.53L509.16 237.51L509.46 236.5L509.77 235.48L510.08 234.47L510.41 233.45L510.75 232.44L511.1 231.43L511.46 230.43L511.82 229.42L512.2 228.42L512.59 227.41L512.98 226.41L513.39 225.41L513.8 224.41L514.22 223.42L514.66 222.42L515.1 221.43L515.55 220.44L516 219.45L516.47 218.46L516.95 217.48L517.43 216.49L517.92 215.51L518.42 214.53L518.93 213.55L519.44 212.58L519.97 211.6L520.5 210.63L521.03 209.66L521.58 208.7L522.13 207.73L522.69 206.77L523.25 205.81L523.82 204.85L524.4 203.9" stroke="#25858e"/>
<path d="M611.5 278.7L610.55 276.24L609.64 273.79L608.79 271.33L607.98 268.89L607.22 266.45L606.51 264.01L605.84 261.59L605.23 259.16L604.65 256.75L604.13 254.34L603.65 251.94L603.21 249.54L602.82 247.16L602.47 244.78L602.16 242.41L601.89 240.05L601.67 237.7L601.48 235.36L601.33 233.04L601.22 230.72L601.15 228.41L601.11 226.12L601.11 223.84L601.14 221.57L601.2 219.31L601.29 217.07L601.4 214.85L601.55 212.64L601.72 210.44L601.91 208.26L602.12 206.1L602.35 203.96L602.6 201.84L602.87 199.74L603.14 197.66L603.43 195.6L603.73 193.56L604.03 191.54L604.33 189.55L604.63 187.58L604.93 185.64L605.22 183.73L605.5 181.85L605.77 179.99L606.03 178.17L606.26 176.38L606.47 174.62L606.65 172.89L606.8 171.2L606.91 169.55L606.98 167.93L607.01 166.35L606.99 164.82L606.91 163.33L606.78 161.88L606.58 160.47L606.31 159.12L605.97 157.81L605.55 156.55L605.04 155.34L604.44 154.19L603.75 153.09L602.95 152.04L602.05 151.05L601.04 150.12L599.91 149.26L598.65 148.45L597.27 147.7L595.75 147.02L594.1 146.4L592.3 145.85L590.35 145.37L588.26 144.95L586 144.6L583.59 144.32L581.02 144.11L578.28 143.97L575.37 143.9L572.29 143.9L569.04 143.97L565.62 144.11L562.02 144.32L558.25 144.6" stroke="#bddf26"/>
<path d="M1247.09 144.95L1245.09 145.36L1243.25 145.85L1241.57 146.4L1240.06 147.02L1238.69 147.7L1237.48 148.44L1236.4 149.25L1235.46 150.12L1234.65 151.05L1233.97 152.03L1233.4 153.08L1232.95 154.18L1232.6 155.33L1232.35 156.54L1232.2 157.8" stroke="#bddf26"/>
<path d="M604.2 278.7L602.48 276.82L600.8 274.95L599.13 273.08L597.5 271.23L595.89 269.38L594.31 267.54L592.75 265.71L591.22 263.9L589.71 262.09L588.22 260.29L586.76 258.5L585.32 256.72L583.9 254.96L582.5 253.21L581.12 251.47L579.76 249.74L578.41 248.03L577.09 246.33L575.78 244.65L574.48 242.98L573.2 241.33L571.93 239.69L570.68 238.07L569.43 236.47L568.19 234.88L566.96 233.31L565.74 231.77L564.52 230.24L563.31 228.73L562.09 227.24L560.88 225.77L559.67 224.32L558.45 222.9L557.23 221.5L556.01 220.12L554.77 218.76L553.53 217.43L552.27 216.13L551 214.85L549.72 213.6L548.42 212.37L547.1 211.17L545.75 210L544.39 208.86L543 207.75L541.58 206.67L540.13 205.62L538.65 204.6L537.14 203.61L535.59 202.66L534 201.73L532.37 200.85L530.7 199.99L528.98 199.17L527.22 198.39L525.41 197.64L523.54 196.93L521.63 196.26L519.65 195.62L517.63 195.03L515.54 194.47L513.39 193.94L511.18 193.46L508.9 193.02L506.56 192.62L504.15 192.26L501.67 191.94L499.11 191.66L496.49 191.42L493.79 191.22L491.02 191.06L488.18 190.95L485.25 190.87L482.25 190.84L479.17 190.85L476.01 190.9L472.78 190.99L469.46 191.13L466.07 191.31L462.59 191.52L459.04 191.78L455.41 192.08L451.69 192.42L447.91 192.8" stroke="#bddf26"/>
<path d="M1355.99 193.22L1353.87 193.68L1351.82 194.18L1349.84 194.72L1347.93 195.3L1346.09 195.92L1344.32 196.57L1342.61 197.26L1340.96 197.99L1339.37 198.75L1337.83 199.55L1336.35 200.39L1334.92 201.26L1333.54 202.16L1332.2 203.1" stroke="#bddf26"/>
<path d="M599.5 286.5L598.67 284.94L597.86 283.38L597.06 281.82L596.29 280.26L595.54 278.7L594.81 277.15L594.1 275.6L593.41 274.05L592.75 272.5L592.1 270.96L591.47 269.42L590.86 267.88L590.27 266.35L589.7 264.81L589.15 263.28L588.62 261.76L588.11 260.23L587.61 258.71L587.14 257.19L586.68 255.68L586.25 254.17L585.83 252.67L585.43 251.16L585.04 249.66L584.68 248.17L584.33 246.68L584 245.2L583.68 243.71L583.39 242.24L583.11 240.77L582.84 239.3L582.59 237.84L582.36 236.38L582.14 234.93L581.93 233.48L581.74 232.04L581.56 230.61L581.4 229.18L581.25 227.76L581.11 226.34L580.99 224.93L580.88 223.53L580.77 222.13L580.68 220.74L580.6 219.36L580.53 217.98L580.47 216.61L580.42 215.25L580.38 213.9L580.34 212.56L580.31 211.22L580.29 209.89L580.28 208.57L580.27 207.26L580.26 205.96L580.26 204.67L580.27 203.39L580.27 202.11L580.28 200.85L580.29 199.6L580.3 198.36L580.31 197.13L580.32 195.91L580.32 194.7L580.33 193.5L580.33 192.31L580.33 191.14L580.32 189.98L580.3 188.83L580.28 187.7L580.25 186.58L580.21 185.47L580.17 184.37L580.11 183.29L580.03 182.23L579.95 181.18L579.85 180.14L579.74 179.12L579.61 178.12L579.46 177.13L579.29 176.16L579.11 175.21L578.9 174.27L578.67 173.35L578.42 172.45L578.14 171.56L577.84 170.7L577.51 169.85L577.15 169.03L576.76 168.22L576.34 167.43L575.88 166.67L575.4 165.92L574.88 165.2L574.32 164.49L573.72 163.81L573.09 163.15L572.42 162.51L571.7 161.9" stroke="#bddf26"/>
</g>
<path d="M1058.13 79.6h6.94M1061.6 76.13v6.94M1064.13 82.4h6.94M1067.6 78.93v6.94M1102.13 94h6.94M1105.6 90.53v6.94M1097.63 92.4h6.94M1101.1 88.93v6.94M1092.33 91.8h6.94M1095.8 88.33v6.94M1100.03 93.2h6.94M1103.5 89.73v6.94M674.53 105.2h6.94M678 101.73v6.94M675.13 105.6h6.94M678.6 102.13v6.94M1106.73 96.7h6.94M1110.2 93.23v6.94M1091.11 90.93h6.94M1094.58 87.46v6.94M503.73 308.3h6.94M507.2 304.83v6.94M515.23 300.5h6.94M518.7 297.03v6.94M498.03 321.2h6.94M501.5 317.73v6.94M507.03 307h6.94M510.5 303.53v6.94M511.03 305.5h6.94M514.5 302.03v6.94M608.03 278.7h6.94M611.5 275.23v6.94M600.73 278.7h6.94M604.2 275.23v6.94M596.03 286.5h6.94M599.5 283.03v6.94" stroke="#f00" stroke-width="1.39" fill="none"/>
<path d="M1022.2 66.64L1020.03 66.96L1019.73 67.9L1021.17 69.4L1024.16 71.38L1028.47 73.75L1033.88 76.43L1040.18 79.32L1047.18 82.36L1054.73 85.47L1062.67 88.59L1070.87 91.68L1079.24 94.7L1087.65 97.6L1096.03 100.36L1104.28 102.95L1112.31 105.35L1120.07 107.53L1127.46 109.47L1134.43 111.17L1140.9 112.6L1146.82 113.76L1152.13 114.64L1156.76 115.23L1160.66 115.52L1163.78 115.52L1166.09 115.23" stroke="#81d34d" stroke-width="2.08" fill="none" stroke-linejoin="round"/>
<path d="M636.9 114.64L642.35 113.76L648.45 112.6L655.16 111.17L662.41 109.47L670.13 107.53L678.24 105.35L686.68 102.95L695.36 100.36L704.2 97.6L713.11 94.7L721.99 91.68L730.73 88.59L739.21 85.47L747.29 82.36L754.82 79.32L761.63 76.43L767.51 73.75L772.24 71.38L775.58 69.4L777.29 67.9" stroke="#81d34d" stroke-width="2.08" fill="none" stroke-linejoin="round"/>
<path d="M1026.27 66.96L1022.2 66.64" stroke="#81d34d" stroke-width="2.08" fill="none" stroke-linejoin="round"/>
<path d="M516.61 282.04L513.4 282.25L510.08 282.85L506.69 283.86L503.31 285.23L500.02 286.96L496.88 289.01L493.98 291.35L491.37 293.94L489.12 296.72L487.3 299.67L485.93 302.72L485.06 305.84L484.7 308.96L484.86 312.04L485.52 315.03L486.66 317.88L488.25 320.55L490.25 322.98L492.59 325.15L495.22 327.02L498.07 328.55L501.09 329.72L504.2 330.51L507.34 330.91L510.47 330.91L513.52 330.51L516.46 329.72L519.25 328.55L521.85 327.02L524.24 325.15L526.41 322.98L528.34 320.55L530 317.88L531.41 315.03L532.54 312.04L533.39 308.96L533.95 305.84L534.22 302.72L534.18 299.67L533.83 296.72L533.17 293.94L532.18 291.35L530.86 289.01L529.23 286.96L527.27 285.23L525 283.86L522.45 282.85L519.64 282.25L516.61 282.04" stroke="#25858e" stroke-width="2.08" fill="none" stroke-linejoin="round"/>
<path d="M602.78 264.24L599.55 264.45L596.18 265.07L592.72 266.08L589.24 267.47L585.8 269.22L582.49 271.29L579.37 273.65L576.52 276.25L573.99 279.06L571.85 282.01L570.14 285.08L568.9 288.19L568.14 291.31L567.88 294.39L568.12 297.37L568.85 300.2L570.03 302.85L571.63 305.27L573.61 307.41L575.92 309.26L578.51 310.77L581.31 311.93L584.28 312.71L587.35 313.11L590.48 313.11L593.6 312.71L596.69 311.93L599.68 310.77L602.55 309.26L605.27 307.41L607.79 305.27L610.11 302.85L612.19 300.2L614.02 297.37L615.57 294.39L616.83 291.31L617.79 288.19L618.43 285.08L618.74 282.01L618.71 279.06L618.32 276.25L617.58 273.65L616.47 271.29L615.01 269.22L613.19 267.47L611.03 266.08L608.56 265.07L605.79 264.45L602.78 264.24" stroke="#bddf26" stroke-width="2.08" fill="none" stroke-linejoin="round"/>
<g fill="none" stroke-width="1.39">
<path d="M767.2 143.9L797.8 100.6" stroke="#666666"/>
<path d="M757.2 162.8L801.1 113.3" stroke="#666666"/>
<path d="M758.3 166.1L807.2 110.6" stroke="#666666"/>
<path d="M692.8 200.2L721.7 157.6" stroke="#666666"/>
<path d="M756.7 206.7L784.4 166.9" stroke="#666666"/>
<path d="M714.4 268.9L716.7 262.2" stroke="#666666"/>
<path d="M511.7 177.8L460.6 188.9" stroke="#666666"/>
<path d="M522.2 205L465.6 211.1" stroke="#666666"/>
<path d="M487.8 202.8L497.8 191.7" stroke="#666666"/>
<path d="M445 203.1L437.2 206.1" stroke="#666666"/>
<path d="M417.8 211.7L412.2 213.9" stroke="#666666"/>
<path d="M395 244.4L390.6 245.3" stroke="#666666"/>
<path d="M456.1 252.2L451.1 253.3" stroke="#666666"/>
<path d="M505.6 215L511.7 210" stroke="#666666"/>
<path d="M490.6 179.8L505.6 175" stroke="#666666"/>
<path d="M550.6 151.1L581.7 135.3" stroke="#666666"/>
<path d="M1217.8 161.1L1165.6 141.7" stroke="#666666"/>
<path d="M1204.4 165L1163.9 157.8" stroke="#666666"/>
<path d="M1263.3 165L1248.9 154.4" stroke="#666666"/>
<path d="M1297.8 172.2L1308.3 176.7" stroke="#666666"/>
<path d="M1311.7 193.9L1280.6 186.4" stroke="#666666"/>
<path d="M1341.1 194.4L1330.6 200" stroke="#666666"/>
<path d="M1252.8 192.2L1257.2 200" stroke="#666666"/>
<path d="M1301.1 238L1288.3 236.7" stroke="#666666"/>
<path d="M1132 104.5L1113.5 100" stroke="#666666"/>
<path d="M1417.5 236.5L1413 232" stroke="#666666"/>
<path d="M1054.4 108.9L1055.72 110.29L1057.06 111.7L1058.41 113.12L1059.77 114.55L1061.14 115.99L1062.52 117.44L1063.9 118.9" stroke="#81d34d"/>
<path d="M1092.2 121.1L1093.14 122.04L1094.09 122.99L1095.04 123.94L1096 124.9L1096.96 125.86L1097.93 126.83L1098.9 127.8" stroke="#81d34d"/>
<path d="M1251.7 218.3L1252.49 219.38L1253.27 220.47L1254.04 221.55L1254.8 222.64L1255.54 223.73L1256.28 224.81L1257 225.9" stroke="#81d34d"/>
<path d="M1288.3 240.6L1289.02 241.78L1289.72 242.97L1290.41 244.16L1291.08 245.34L1291.73 246.53L1292.37 247.71L1293 248.9" stroke="#81d34d"/>
<path d="M1308.3 195.3L1309.85 196.26L1311.38 197.21L1312.91 198.17L1314.42 199.13L1315.93 200.09L1317.42 201.04L1318.9 202" stroke="#81d34d"/>
<path d="M1348.9 203.3L1350.69 204.41L1352.47 205.53L1354.22 206.64L1355.97 207.76L1357.69 208.87L1359.41 209.99L1361.1 211.1" stroke="#81d34d"/>
<path d="M1352.8 220L1353.68 220.56L1354.56 221.11L1355.44 221.67L1356.31 222.23L1357.18 222.79L1358.04 223.34L1358.9 223.9" stroke="#81d34d"/>
<path d="M1351.7 229.4L1352.48 230.2L1353.25 231L1354.02 231.8L1354.78 232.6L1355.53 233.4L1356.27 234.2L1357 235" stroke="#81d34d"/>
<path d="M1367.2 236.1L1367.9 236.79L1368.6 237.47L1369.29 238.16L1369.98 238.84L1370.66 239.53L1371.33 240.21L1372 240.9" stroke="#81d34d"/>
<path d="M370.9 243.1L369.88 243.8L368.86 244.5L367.86 245.2L366.86 245.9L365.86 246.6L364.88 247.3L363.9 248" stroke="#81d34d"/>
<path d="M1168.9 137.2L1167.13 137.34L1165.44 137.52L1163.81 137.73L1162.26 137.97L1160.77 138.25L1159.35 138.56L1158 138.9" stroke="#25858e"/>
<path d="M1197.8 169.4L1196.65 170.35L1195.57 171.35L1194.53 172.38L1193.55 173.46L1192.62 174.57L1191.74 175.72L1190.9 176.9" stroke="#25858e"/>
<path d="M1275.6 249.1L1274.8 249.2L1273.99 249.29L1273.19 249.39L1272.39 249.49L1271.59 249.59L1270.8 249.7L1270 249.8" stroke="#25858e"/>
<path d="M431.1 240.9L429.42 239.71L427.73 238.55L426.03 237.41L424.32 236.3L422.6 235.21L420.86 234.14L419.1 233.1" stroke="#25858e"/>
<path d="M524.4 203.9L526.21 201.13L528.08 198.38L529.99 195.66L531.94 192.96L533.93 190.28L535.95 187.63L538 185" stroke="#25858e"/>
<path d="M1232.2 157.8L1232.16 158.75L1232.17 159.73L1232.22 160.74L1232.31 161.77L1232.44 162.82L1232.6 163.9L1232.8 165" stroke="#bddf26"/>
<path d="M1332.2 203.1L1331.27 203.75L1330.36 204.42L1329.47 205.11L1328.6 205.81L1327.75 206.52L1326.92 207.25L1326.1 208" stroke="#bddf26"/>
<path d="M571.7 161.9L570.05 160.77L568.21 159.74L566.17 158.81L563.93 157.98L561.48 157.25L558.81 156.62L555.9 156.1" stroke="#bddf26"/>
</g>
<rect x="1062.8" y="117.8" width="2.2" height="2.2" fill="#ff6347"/>
<rect x="1097.8" y="126.7" width="2.2" height="2.2" fill="#ff6347"/>
<rect x="1255.9" y="224.8" width="2.2" height="2.2" fill="#ff6347"/>
<rect x="1291.9" y="247.8" width="2.2" height="2.2" fill="#ff6347"/>
<rect x="1317.8" y="200.9" width="2.2" height="2.2" fill="#ff6347"/>
<rect x="1360" y="210" width="2.2" height="2.2" fill="#ff6347"/>
<rect x="1357.8" y="222.8" width="2.2" height="2.2" fill="#ff6347"/>
<rect x="1355.9" y="233.9" width="2.2" height="2.2" fill="#ff6347"/>
<rect x="1370.9" y="239.8" width="2.2" height="2.2" fill="#ff6347"/>
<rect x="362.8" y="246.9" width="2.2" height="2.2" fill="#ff6347"/>
<rect x="1156.9" y="137.8" width="2.2" height="2.2" fill="#ff6347"/>
<rect x="1189.8" y="175.8" width="2.2" height="2.2" fill="#ff6347"/>
<rect x="1268.9" y="248.7" width="2.2" height="2.2" fill="#ff6347"/>
<rect x="418" y="232" width="2.2" height="2.2" fill="#ff6347"/>
<rect x="536.9" y="183.9" width="2.2" height="2.2" fill="#ff6347"/>
<rect x="1231.7" y="163.9" width="2.2" height="2.2" fill="#ff6347"/>
<rect x="1325" y="206.9" width="2.2" height="2.2" fill="#ff6347"/>
<rect x="554.8" y="155" width="2.2" height="2.2" fill="#ff6347"/>
</g>
<text x="1081.69" y="94.6" font-family="Liberation Sans" font-size="11.77" fill="#fff" textLength="24.42" lengthAdjust="spacingAndGlyphs">DKD</text>
<text x="497.54" y="310" font-family="Liberation Sans" font-size="11.77" fill="#fff" textLength="23.72" lengthAdjust="spacingAndGlyphs">HYD</text>
<text x="579.86" y="292.2" font-family="Liberation Sans" font-size="11.77" fill="#fff" textLength="26.67" lengthAdjust="spacingAndGlyphs">MON</text>
<g id="info">
<text x="316.02" y="30.27" font-family="Liberation Mono" font-size="15.37" fill="#fff" textLength="50.16" lengthAdjust="spacingAndGlyphs" xml:space="preserve">UK003W</text>
<text x="316.02" y="43.31" font-family="Liberation Mono" font-size="15.37" fill="#fff" textLength="317.66" lengthAdjust="spacingAndGlyphs" xml:space="preserve">Beg: 20251202 17:55:06 (sol = 250.45°)</text>
<text x="316.02" y="56.36" font-family="Liberation Mono" font-size="15.37" fill="#fff" textLength="317.66" lengthAdjust="spacingAndGlyphs" xml:space="preserve">End: 20251203 06:19:25 (sol = 250.98°)</text>
<text x="316.02" y="69.4" font-family="Liberation Mono" font-size="15.37" fill="#fff" textLength="317.66" lengthAdjust="spacingAndGlyphs" xml:space="preserve">--------------------------------------</text>
<text x="316.02" y="82.45" font-family="Liberation Mono" font-size="15.37" fill="#fff" textLength="58.52" lengthAdjust="spacingAndGlyphs" xml:space="preserve">...: 30</text>
<text x="316.02" y="95.49" font-family="Liberation Mono" font-size="15.37" fill="#fff" textLength="58.52" lengthAdjust="spacingAndGlyphs" xml:space="preserve">DKD: 10</text>
<text x="316.02" y="108.53" font-family="Liberation Mono" font-size="15.37" fill="#fff" textLength="50.16" lengthAdjust="spacingAndGlyphs" xml:space="preserve">HYD: 5</text>
<text x="316.02" y="121.58" font-family="Liberation Mono" font-size="15.37" fill="#fff" textLength="50.16" lengthAdjust="spacingAndGlyphs" xml:space="preserve">MON: 3</text>
</g>
<g id="timeline">
<g id="months">
<text x="149" y="697.6" font-family="Liberation Sans" font-size="29.43" fill="#555555" textLength="55" lengthAdjust="spacingAndGlyphs" transform="rotate(-90 149 697.6)">APR</text>
<text x="295" y="701.35" font-family="Liberation Sans" font-size="29.43" fill="#555555" textLength="57.75" lengthAdjust="spacingAndGlyphs" transform="rotate(-90 295 701.35)">MAY</text>
<text x="436" y="690.87" font-family="Liberation Sans" font-size="29.43" fill="#555555" textLength="49.27" lengthAdjust="spacingAndGlyphs" transform="rotate(-90 436 690.87)">JUN</text>
<text x="576.7" y="685.57" font-family="Liberation Sans" font-size="29.43" fill="#555555" textLength="43.97" lengthAdjust="spacingAndGlyphs" transform="rotate(-90 576.7 685.57)">JUL</text>
<text x="725" y="703.4" font-family="Liberation Sans" font-size="29.43" fill="#555555" textLength="60.8" lengthAdjust="spacingAndGlyphs" transform="rotate(-90 725 703.4)">AUG</text>
<text x="872.7" y="694.47" font-family="Liberation Sans" font-size="29.43" fill="#555555" textLength="51.88" lengthAdjust="spacingAndGlyphs" transform="rotate(-90 872.7 694.47)">SEP</text>
<text x="1018.3" y="700.47" font-family="Liberation Sans" font-size="29.43" fill="#555555" textLength="58.17" lengthAdjust="spacingAndGlyphs" transform="rotate(-90 1018.3 700.47)">OCT</text>
<text x="1170.7" y="703.69" font-family="Liberation Sans" font-size="29.43" fill="#555555" textLength="61.09" lengthAdjust="spacingAndGlyphs" transform="rotate(-90 1170.7 703.69)">NOV</text>
<text x="1320" y="700.88" font-family="Liberation Sans" font-size="29.43" fill="#555555" textLength="58.28" lengthAdjust="spacingAndGlyphs" transform="rotate(-90 1320 700.88)">DEC</text>
<text x="1469.3" y="687.74" font-family="Liberation Sans" font-size="29.43" fill="#555555" textLength="47.44" lengthAdjust="spacingAndGlyphs" transform="rotate(-90 1469.3 687.74)">JAN</text>
<text x="1628.3" y="697.83" font-family="Liberation Sans" font-size="29.43" fill="#555555" textLength="52.53" lengthAdjust="spacingAndGlyphs" transform="rotate(-90 1628.3 697.83)">FEB</text>
<text x="1766.7" y="705.8" font-family="Liberation Sans" font-size="29.43" fill="#555555" textLength="62.2" lengthAdjust="spacingAndGlyphs" transform="rotate(-90 1766.7 705.8)">MAR</text>
</g>
<g id="bars" fill="none" stroke-width="4.17">
<path d="M105.8 834H130" stroke="#bddf26"/>
<path d="M165 834H345" stroke="#bddf26"/>
<path d="M365.8 834H625" stroke="#bddf26"/>
<path d="M636 834H787" stroke="#bddf26"/>
<path d="M807 834H900.8" stroke="#bddf26"/>
<path d="M920 834H973" stroke="#bddf26"/>
<path d="M984 834H1066" stroke="#bddf26"/>
<path d="M1082 834H1204" stroke="#bddf26"/>
<path d="M1244 834H1326" stroke="#bddf26"/>
<path d="M1337 834H1356" stroke="#bddf26"/>
<path d="M1381 834H1444" stroke="#bddf26"/>
<path d="M1459 834H1512" stroke="#bddf26"/>
<path d="M1523 834H1547" stroke="#bddf26"/>
<path d="M1724 834H1748" stroke="#bddf26"/>
<path d="M1758 834H1782" stroke="#bddf26"/>
<path d="M165 817.69H189" stroke="#81d34d"/>
<path d="M224.2 817.69H287" stroke="#81d34d"/>
<path d="M312 817.69H340.8" stroke="#81d34d"/>
<path d="M365.8 817.69H493" stroke="#81d34d"/>
<path d="M508 817.69H654" stroke="#81d34d"/>
<path d="M704 817.69H738" stroke="#81d34d"/>
<path d="M773 817.69H846" stroke="#81d34d"/>
<path d="M871 817.69H988" stroke="#81d34d"/>
<path d="M1003 817.69H1017" stroke="#81d34d"/>
<path d="M1062 817.69H1213" stroke="#81d34d"/>
<path d="M1244 817.69H1267" stroke="#81d34d"/>
<path d="M1293 817.69H1316" stroke="#81d34d"/>
<path d="M1342 817.69H1365" stroke="#81d34d"/>
<path d="M1386 817.69H1429" stroke="#81d34d"/>
<path d="M1459 817.69H1483" stroke="#81d34d"/>
<path d="M1548 817.69H1571" stroke="#81d34d"/>
<path d="M165 801.38H189" stroke="#4ec36b"/>
<path d="M258 801.38H488" stroke="#4ec36b"/>
<path d="M508 801.38H615" stroke="#4ec36b"/>
<path d="M626 801.38H718" stroke="#4ec36b"/>
<path d="M729 801.38H826" stroke="#4ec36b"/>
<path d="M949 801.38H1150" stroke="#4ec36b"/>
<path d="M1160 801.38H1248" stroke="#4ec36b"/>
<path d="M1258 801.38H1444" stroke="#4ec36b"/>
<path d="M1459 801.38H1483" stroke="#4ec36b"/>
<path d="M1553 801.38H1576" stroke="#4ec36b"/>
<path d="M194 785.07H218" stroke="#2ab07f"/>
<path d="M322 785.07H507" stroke="#2ab07f"/>
<path d="M518 785.07H542" stroke="#2ab07f"/>
<path d="M557 785.07H684" stroke="#2ab07f"/>
<path d="M807 785.07H831" stroke="#2ab07f"/>
<path d="M954 785.07H973" stroke="#2ab07f"/>
<path d="M989 785.07H1125" stroke="#2ab07f"/>
<path d="M1155 785.07H1218" stroke="#2ab07f"/>
<path d="M1244 785.07H1267" stroke="#2ab07f"/>
<path d="M1317 785.07H1341" stroke="#2ab07f"/>
<path d="M1396 785.07H1419" stroke="#2ab07f"/>
<path d="M1464 785.07H1650" stroke="#2ab07f"/>
<path d="M341 768.76H370" stroke="#1e9b8a"/>
<path d="M410 768.76H448" stroke="#1e9b8a"/>
<path d="M469 768.76H493" stroke="#1e9b8a"/>
<path d="M528 768.76H546" stroke="#1e9b8a"/>
<path d="M562 768.76H591" stroke="#1e9b8a"/>
<path d="M616 768.76H649" stroke="#1e9b8a"/>
<path d="M959 768.76H988" stroke="#1e9b8a"/>
<path d="M1062 768.76H1086" stroke="#1e9b8a"/>
<path d="M1101 768.76H1125" stroke="#1e9b8a"/>
<path d="M1160 768.76H1194" stroke="#1e9b8a"/>
<path d="M1249 768.76H1272" stroke="#1e9b8a"/>
<path d="M1425 768.76H1512" stroke="#1e9b8a"/>
<path d="M420 752.45H444" stroke="#25858e"/>
<path d="M533 752.45H556" stroke="#25858e"/>
<path d="M567 752.45H591" stroke="#25858e"/>
<path d="M621 752.45H743" stroke="#25858e"/>
<path d="M969 752.45H1135" stroke="#25858e"/>
<path d="M1185 752.45H1346" stroke="#25858e"/>
<path d="M1469 752.45H1493" stroke="#25858e"/>
<path d="M430 736.14H453" stroke="#2d708e"/>
<path d="M577 736.14H733" stroke="#2d708e"/>
<path d="M994 736.14H1105" stroke="#2d708e"/>
<path d="M1116 736.14H1223" stroke="#2d708e"/>
<path d="M1263 736.14H1292" stroke="#2d708e"/>
<path d="M1489 736.14H1512" stroke="#2d708e"/>
<path d="M592 719.83H615" stroke="#375a8c"/>
<path d="M655 719.83H772" stroke="#375a8c"/>
<path d="M1072 719.83H1243" stroke="#375a8c"/>
<path d="M1263 719.83H1287" stroke="#375a8c"/>
<path d="M596 703.52H733" stroke="#424086"/>
<path d="M1092 703.52H1120" stroke="#424086"/>
<path d="M1200 703.52H1223" stroke="#424086"/>
<path d="M1273 703.52H1326" stroke="#424086"/>
<path d="M1111 687.21H1135" stroke="#482475"/>
</g>
<g fill="none" stroke="#c0c0c0" stroke-opacity="0.5" stroke-width="2.08" stroke-dasharray="2.08 3.44">
<path d="M75 842.5V641.5"/>
<path d="M219 842.5V641.5"/>
<path d="M365 842.5V641.5"/>
<path d="M506 842.5V641.5"/>
<path d="M651 842.5V641.5"/>
<path d="M797 842.5V641.5"/>
<path d="M940 842.5V641.5"/>
<path d="M1091 842.5V641.5"/>
<path d="M1239 842.5V641.5"/>
<path d="M1394 842.5V641.5"/>
<path d="M1548 842.5V641.5"/>
<path d="M1687 842.5V641.5"/>
</g>
<path id="peaks" d="M114 834h7.6M117.8 830.2v7.6M240.9 834h7.6M244.7 830.2v7.6M510.9 834h7.6M514.7 830.2v7.6M707 834h7.6M710.8 830.2v7.6M834 834h7.6M837.8 830.2v7.6M962.2 834h7.6M966 830.2v7.6M987 834h7.6M990.8 830.2v7.6M1117 834h7.6M1120.8 830.2v7.6M1295.9 834h7.6M1299.7 830.2v7.6M1342 834h7.6M1345.8 830.2v7.6M1412.9 834h7.6M1416.7 830.2v7.6M1482 834h7.6M1485.8 830.2v7.6M1530.9 834h7.6M1534.7 830.2v7.6M1732 834h7.6M1735.8 830.2v7.6M1766.2 834h7.6M1770 830.2v7.6M173.2 817.69h7.6M177 813.89v7.6M255.9 817.69h7.6M259.7 813.89v7.6M324.2 817.69h7.6M328 813.89v7.6M437.9 817.69h7.6M441.7 813.89v7.6M599.2 817.69h7.6M603 813.89v7.6M717 817.69h7.6M720.8 813.89v7.6M794 817.69h7.6M797.8 813.89v7.6M940 817.69h7.6M943.8 813.89v7.6M1006.2 817.69h7.6M1010 813.89v7.6M1153.2 817.69h7.6M1157 813.89v7.6M1251.2 817.69h7.6M1255 813.89v7.6M1300 817.69h7.6M1303.8 813.89v7.6M1349.9 817.69h7.6M1353.7 813.89v7.6M1402.9 817.69h7.6M1406.7 813.89v7.6M1467 817.69h7.6M1470.8 813.89v7.6M1555 817.69h7.6M1558.8 813.89v7.6M175 801.38h7.6M178.8 797.58v7.6M379 801.38h7.6M382.8 797.58v7.6M545 801.38h7.6M548.8 797.58v7.6M683.2 801.38h7.6M687 797.58v7.6M742 801.38h7.6M745.8 797.58v7.6M1075 801.38h7.6M1078.8 797.58v7.6M1217 801.38h7.6M1220.8 797.58v7.6M1304.9 801.38h7.6M1308.7 797.58v7.6M1467 801.38h7.6M1470.8 797.58v7.6M1560 801.38h7.6M1563.8 797.58v7.6M202.2 785.07h7.6M206 781.27v7.6M400.9 785.07h7.6M404.7 781.27v7.6M526.2 785.07h7.6M530 781.27v7.6M639 785.07h7.6M642.8 781.27v7.6M815 785.07h7.6M818.8 781.27v7.6M960.2 785.07h7.6M964 781.27v7.6M1040.9 785.07h7.6M1044.7 781.27v7.6M1188.2 785.07h7.6M1192 781.27v7.6M1251.2 785.07h7.6M1255 781.27v7.6M1325 785.07h7.6M1328.8 781.27v7.6M1402.9 785.07h7.6M1406.7 781.27v7.6M1546.2 785.07h7.6M1550 781.27v7.6M355.9 768.76h7.6M359.7 764.96v7.6M427 768.76h7.6M430.8 764.96v7.6M477 768.76h7.6M480.8 764.96v7.6M535.9 768.76h7.6M539.7 764.96v7.6M571.2 768.76h7.6M575 764.96v7.6M630.9 768.76h7.6M634.7 764.96v7.6M974.2 768.76h7.6M978 764.96v7.6M1070 768.76h7.6M1073.8 764.96v7.6M1109.2 768.76h7.6M1113 764.96v7.6M1177.9 768.76h7.6M1181.7 764.96v7.6M1255.9 768.76h7.6M1259.7 764.96v7.6M1467 768.76h7.6M1470.8 764.96v7.6M427.9 752.45h7.6M431.7 748.65v7.6M539.9 752.45h7.6M543.7 748.65v7.6M574.9 752.45h7.6M578.7 748.65v7.6M704 752.45h7.6M707.8 748.65v7.6M1095 752.45h7.6M1098.8 748.65v7.6M1271.2 752.45h7.6M1275 748.65v7.6M1477 752.45h7.6M1480.8 748.65v7.6M437.9 736.14h7.6M441.7 732.34v7.6M630.9 736.14h7.6M634.7 732.34v7.6M1039 736.14h7.6M1042.8 732.34v7.6M1167.9 736.14h7.6M1171.7 732.34v7.6M1275 736.14h7.6M1278.8 732.34v7.6M1497 736.14h7.6M1500.8 732.34v7.6M599.2 719.83h7.6M603 716.03v7.6M727 719.83h7.6M730.8 716.03v7.6M1188.2 719.83h7.6M1192 716.03v7.6M1271.2 719.83h7.6M1275 716.03v7.6M688.2 703.52h7.6M692 699.72v7.6M1102.2 703.52h7.6M1106 699.72v7.6M1207 703.52h7.6M1210.8 699.72v7.6M1299.9 703.52h7.6M1303.7 699.72v7.6M1119 687.21h7.6M1122.8 683.41v7.6" fill="none" stroke="#fff" stroke-width="2.08"/>
<g id="blabels">
<text x="108.53" y="831.1" font-family="Liberation Sans" font-size="10.3" fill="#fff" textLength="18.73" lengthAdjust="spacingAndGlyphs">KSE</text>
<text x="245.98" y="831.1" font-family="Liberation Sans" font-size="10.3" fill="#fff" textLength="18.03" lengthAdjust="spacingAndGlyphs">ETA</text>
<text x="485" y="831.1" font-family="Liberation Sans" font-size="10.3" fill="#fff" textLength="20.8" lengthAdjust="spacingAndGlyphs">NZC</text>
<text x="700.82" y="831.1" font-family="Liberation Sans" font-size="10.3" fill="#fff" textLength="21.36" lengthAdjust="spacingAndGlyphs">NDA</text>
<text x="844.79" y="831.1" font-family="Liberation Sans" font-size="10.3" fill="#fff" textLength="18.22" lengthAdjust="spacingAndGlyphs">SPE</text>
<text x="936.02" y="831.1" font-family="Liberation Sans" font-size="10.3" fill="#fff" textLength="20.97" lengthAdjust="spacingAndGlyphs">ARD</text>
<text x="1015.06" y="831.1" font-family="Liberation Sans" font-size="10.3" fill="#fff" textLength="19.88" lengthAdjust="spacingAndGlyphs">EGE</text>
<text x="1133.41" y="831.1" font-family="Liberation Sans" font-size="10.3" fill="#fff" textLength="19.17" lengthAdjust="spacingAndGlyphs">NTA</text>
<text x="1273.31" y="831.1" font-family="Liberation Sans" font-size="10.3" fill="#fff" textLength="23.38" lengthAdjust="spacingAndGlyphs">MON</text>
<text x="1333.25" y="831.1" font-family="Liberation Sans" font-size="10.3" fill="#fff" textLength="20.11" lengthAdjust="spacingAndGlyphs">URS</text>
<text x="1402.52" y="831.1" font-family="Liberation Sans" font-size="10.3" fill="#fff" textLength="19.95" lengthAdjust="spacingAndGlyphs">AHY</text>
<text x="1473.95" y="831.1" font-family="Liberation Sans" font-size="10.3" fill="#fff" textLength="23.11" lengthAdjust="spacingAndGlyphs">GUM</text>
<text x="1524.52" y="831.1" font-family="Liberation Sans" font-size="10.3" fill="#fff" textLength="20.95" lengthAdjust="spacingAndGlyphs">OHY</text>
<text x="1725.91" y="831.1" font-family="Liberation Sans" font-size="10.3" fill="#fff" textLength="20.17" lengthAdjust="spacingAndGlyphs">XHE</text>
<text x="1762.15" y="831.1" font-family="Liberation Sans" font-size="10.3" fill="#fff" textLength="15.7" lengthAdjust="spacingAndGlyphs">EVI</text>
<text x="167.3" y="814.79" font-family="Liberation Sans" font-size="10.3" fill="#fff" textLength="19.41" lengthAdjust="spacingAndGlyphs">AVB</text>
<text x="247.45" y="814.79" font-family="Liberation Sans" font-size="10.3" fill="#fff" textLength="16.3" lengthAdjust="spacingAndGlyphs">ELY</text>
<text x="315.45" y="814.79" font-family="Liberation Sans" font-size="10.3" fill="#fff" textLength="21.89" lengthAdjust="spacingAndGlyphs">CAM</text>
<text x="422.13" y="814.79" font-family="Liberation Sans" font-size="10.3" fill="#fff" textLength="19.94" lengthAdjust="spacingAndGlyphs">SSG</text>
<text x="568.82" y="814.79" font-family="Liberation Sans" font-size="10.3" fill="#fff" textLength="19.36" lengthAdjust="spacingAndGlyphs">PCA</text>
<text x="710.34" y="814.79" font-family="Liberation Sans" font-size="10.3" fill="#fff" textLength="21.33" lengthAdjust="spacingAndGlyphs">AUD</text>
<text x="799.2" y="814.79" font-family="Liberation Sans" font-size="10.3" fill="#fff" textLength="20.59" lengthAdjust="spacingAndGlyphs">AUR</text>
<text x="920.9" y="814.79" font-family="Liberation Sans" font-size="10.3" fill="#fff" textLength="20.39" lengthAdjust="spacingAndGlyphs">DSX</text>
<text x="999.19" y="814.79" font-family="Liberation Sans" font-size="10.3" fill="#fff" textLength="21.62" lengthAdjust="spacingAndGlyphs">OCU</text>
<text x="1127.2" y="814.79" font-family="Liberation Sans" font-size="10.3" fill="#fff" textLength="20.61" lengthAdjust="spacingAndGlyphs">OER</text>
<text x="1244.79" y="814.79" font-family="Liberation Sans" font-size="10.3" fill="#fff" textLength="21.42" lengthAdjust="spacingAndGlyphs">DKD</text>
<text x="1294.31" y="814.79" font-family="Liberation Sans" font-size="10.3" fill="#fff" textLength="20.38" lengthAdjust="spacingAndGlyphs">DSV</text>
<text x="1345.09" y="814.79" font-family="Liberation Sans" font-size="10.3" fill="#fff" textLength="16.81" lengthAdjust="spacingAndGlyphs">ALY</text>
<text x="1400.27" y="814.79" font-family="Liberation Sans" font-size="10.3" fill="#fff" textLength="14.47" lengthAdjust="spacingAndGlyphs">ILE</text>
<text x="1461.09" y="814.79" font-family="Liberation Sans" font-size="10.3" fill="#fff" textLength="19.81" lengthAdjust="spacingAndGlyphs">SCC</text>
<text x="1550.28" y="814.79" font-family="Liberation Sans" font-size="10.3" fill="#fff" textLength="18.44" lengthAdjust="spacingAndGlyphs">FEV</text>
<text x="168.54" y="798.48" font-family="Liberation Sans" font-size="10.3" fill="#fff" textLength="16.92" lengthAdjust="spacingAndGlyphs">LYR</text>
<text x="363.95" y="798.48" font-family="Liberation Sans" font-size="10.3" fill="#fff" textLength="18.09" lengthAdjust="spacingAndGlyphs">JMC</text>
<text x="551.05" y="798.48" font-family="Liberation Sans" font-size="10.3" fill="#fff" textLength="14.91" lengthAdjust="spacingAndGlyphs">JPE</text>
<text x="662.47" y="798.48" font-family="Liberation Sans" font-size="10.3" fill="#fff" textLength="19.06" lengthAdjust="spacingAndGlyphs">PAU</text>
<text x="765.78" y="798.48" font-family="Liberation Sans" font-size="10.3" fill="#fff" textLength="16.84" lengthAdjust="spacingAndGlyphs">NIA</text>
<text x="1040.47" y="798.48" font-family="Liberation Sans" font-size="10.3" fill="#fff" textLength="18.06" lengthAdjust="spacingAndGlyphs">STA</text>
<text x="1192.68" y="798.48" font-family="Liberation Sans" font-size="10.3" fill="#fff" textLength="22.64" lengthAdjust="spacingAndGlyphs">NOO</text>
<text x="1342.15" y="798.48" font-family="Liberation Sans" font-size="10.3" fill="#fff" textLength="22.89" lengthAdjust="spacingAndGlyphs">COM</text>
<text x="1460.54" y="798.48" font-family="Liberation Sans" font-size="10.3" fill="#fff" textLength="20.92" lengthAdjust="spacingAndGlyphs">NCC</text>
<text x="1554.86" y="798.48" font-family="Liberation Sans" font-size="10.3" fill="#fff" textLength="19.28" lengthAdjust="spacingAndGlyphs">FED</text>
<text x="197.56" y="782.17" font-family="Liberation Sans" font-size="10.3" fill="#fff" textLength="16.88" lengthAdjust="spacingAndGlyphs">HVI</text>
<text x="403.64" y="782.17" font-family="Liberation Sans" font-size="10.3" fill="#fff" textLength="16.33" lengthAdjust="spacingAndGlyphs">ARI</text>
<text x="520.16" y="782.17" font-family="Liberation Sans" font-size="10.3" fill="#fff" textLength="19.69" lengthAdjust="spacingAndGlyphs">SZC</text>
<text x="608.82" y="782.17" font-family="Liberation Sans" font-size="10.3" fill="#fff" textLength="19.36" lengthAdjust="spacingAndGlyphs">CAP</text>
<text x="808.7" y="782.17" font-family="Liberation Sans" font-size="10.3" fill="#fff" textLength="20.59" lengthAdjust="spacingAndGlyphs">NUE</text>
<text x="951.18" y="782.17" font-family="Liberation Sans" font-size="10.3" fill="#fff" textLength="20.44" lengthAdjust="spacingAndGlyphs">OCT</text>
<text x="1050.54" y="782.17" font-family="Liberation Sans" font-size="10.3" fill="#fff" textLength="17.33" lengthAdjust="spacingAndGlyphs">ORI</text>
<text x="1175.12" y="782.17" font-family="Liberation Sans" font-size="10.3" fill="#fff" textLength="22.75" lengthAdjust="spacingAndGlyphs">AMO</text>
<text x="1245.4" y="782.17" font-family="Liberation Sans" font-size="10.3" fill="#fff" textLength="20.2" lengthAdjust="spacingAndGlyphs">DPC</text>
<text x="1320.88" y="782.17" font-family="Liberation Sans" font-size="10.3" fill="#fff" textLength="16.23" lengthAdjust="spacingAndGlyphs">XVI</text>
<text x="1396.76" y="782.17" font-family="Liberation Sans" font-size="10.3" fill="#fff" textLength="21.48" lengthAdjust="spacingAndGlyphs">QUA</text>
<text x="1549.15" y="782.17" font-family="Liberation Sans" font-size="10.3" fill="#fff" textLength="20.89" lengthAdjust="spacingAndGlyphs">AAN</text>
<text x="345.9" y="765.86" font-family="Liberation Sans" font-size="10.3" fill="#fff" textLength="19.2" lengthAdjust="spacingAndGlyphs">TAH</text>
<text x="421.15" y="765.86" font-family="Liberation Sans" font-size="10.3" fill="#fff" textLength="15.7" lengthAdjust="spacingAndGlyphs">JEA</text>
<text x="475.19" y="765.86" font-family="Liberation Sans" font-size="10.3" fill="#fff" textLength="11.62" lengthAdjust="spacingAndGlyphs">JIP</text>
<text x="528.03" y="765.86" font-family="Liberation Sans" font-size="10.3" fill="#fff" textLength="17.94" lengthAdjust="spacingAndGlyphs">PPS</text>
<text x="566.66" y="765.86" font-family="Liberation Sans" font-size="10.3" fill="#fff" textLength="19.69" lengthAdjust="spacingAndGlyphs">ZCS</text>
<text x="621.57" y="765.86" font-family="Liberation Sans" font-size="10.3" fill="#fff" textLength="21.86" lengthAdjust="spacingAndGlyphs">GDR</text>
<text x="960.8" y="765.86" font-family="Liberation Sans" font-size="10.3" fill="#fff" textLength="20.59" lengthAdjust="spacingAndGlyphs">DRA</text>
<text x="1062.66" y="765.86" font-family="Liberation Sans" font-size="10.3" fill="#fff" textLength="20.48" lengthAdjust="spacingAndGlyphs">LUM</text>
<text x="1103.1" y="765.86" font-family="Liberation Sans" font-size="10.3" fill="#fff" textLength="19.8" lengthAdjust="spacingAndGlyphs">RPU</text>
<text x="1167.02" y="765.86" font-family="Liberation Sans" font-size="10.3" fill="#fff" textLength="19.95" lengthAdjust="spacingAndGlyphs">THA</text>
<text x="1249.7" y="765.86" font-family="Liberation Sans" font-size="10.3" fill="#fff" textLength="19.2" lengthAdjust="spacingAndGlyphs">PSU</text>
<text x="1461.08" y="765.86" font-family="Liberation Sans" font-size="10.3" fill="#fff" textLength="19.44" lengthAdjust="spacingAndGlyphs">XCB</text>
<text x="424.02" y="749.55" font-family="Liberation Sans" font-size="10.3" fill="#fff" textLength="15.97" lengthAdjust="spacingAndGlyphs">JRC</text>
<text x="534.11" y="749.55" font-family="Liberation Sans" font-size="10.3" fill="#fff" textLength="20.78" lengthAdjust="spacingAndGlyphs">CAN</text>
<text x="569.65" y="749.55" font-family="Liberation Sans" font-size="10.3" fill="#fff" textLength="18.7" lengthAdjust="spacingAndGlyphs">FAN</text>
<text x="672.59" y="749.55" font-family="Liberation Sans" font-size="10.3" fill="#fff" textLength="18.81" lengthAdjust="spacingAndGlyphs">PER</text>
<text x="1040.76" y="749.55" font-family="Liberation Sans" font-size="10.3" fill="#fff" textLength="18.69" lengthAdjust="spacingAndGlyphs">CTA</text>
<text x="1255.1" y="749.55" font-family="Liberation Sans" font-size="10.3" fill="#fff" textLength="20.8" lengthAdjust="spacingAndGlyphs">HYD</text>
<text x="1469.88" y="749.55" font-family="Liberation Sans" font-size="10.3" fill="#fff" textLength="22.23" lengthAdjust="spacingAndGlyphs">XUM</text>
<text x="430.87" y="733.24" font-family="Liberation Sans" font-size="10.3" fill="#fff" textLength="21.27" lengthAdjust="spacingAndGlyphs">COR</text>
<text x="647.77" y="733.24" font-family="Liberation Sans" font-size="10.3" fill="#fff" textLength="20.25" lengthAdjust="spacingAndGlyphs">SDA</text>
<text x="1041.14" y="733.24" font-family="Liberation Sans" font-size="10.3" fill="#fff" textLength="16.72" lengthAdjust="spacingAndGlyphs">LMI</text>
<text x="1156.77" y="733.24" font-family="Liberation Sans" font-size="10.3" fill="#fff" textLength="19.27" lengthAdjust="spacingAndGlyphs">LEO</text>
<text x="1264.98" y="733.24" font-family="Liberation Sans" font-size="10.3" fill="#fff" textLength="19.44" lengthAdjust="spacingAndGlyphs">EHY</text>
<text x="1490.68" y="733.24" font-family="Liberation Sans" font-size="10.3" fill="#fff" textLength="19.64" lengthAdjust="spacingAndGlyphs">ECV</text>
<text x="595.38" y="716.93" font-family="Liberation Sans" font-size="10.3" fill="#fff" textLength="16.23" lengthAdjust="spacingAndGlyphs">JXA</text>
<text x="705.67" y="716.93" font-family="Liberation Sans" font-size="10.3" fill="#fff" textLength="20.27" lengthAdjust="spacingAndGlyphs">KCG</text>
<text x="1145.86" y="716.93" font-family="Liberation Sans" font-size="10.3" fill="#fff" textLength="21.48" lengthAdjust="spacingAndGlyphs">AND</text>
<text x="1264.21" y="716.93" font-family="Liberation Sans" font-size="10.3" fill="#fff" textLength="21.58" lengthAdjust="spacingAndGlyphs">DAD</text>
<text x="657.89" y="700.62" font-family="Liberation Sans" font-size="10.3" fill="#fff" textLength="15.81" lengthAdjust="spacingAndGlyphs">ERI</text>
<text x="1098.73" y="700.62" font-family="Liberation Sans" font-size="10.3" fill="#fff" textLength="19.14" lengthAdjust="spacingAndGlyphs">SLD</text>
<text x="1201.18" y="700.62" font-family="Liberation Sans" font-size="10.3" fill="#fff" textLength="20.64" lengthAdjust="spacingAndGlyphs">ORS</text>
<text x="1288.44" y="700.62" font-family="Liberation Sans" font-size="10.3" fill="#fff" textLength="22.12" lengthAdjust="spacingAndGlyphs">GEM</text>
<text x="1112.16" y="684.31" font-family="Liberation Sans" font-size="10.3" fill="#fff" textLength="21.69" lengthAdjust="spacingAndGlyphs">KUM</text>
</g>
<path d="M1248.5 842.5V641.5" stroke="#f00" stroke-width="1.39" stroke-dasharray="5.14 2.22" fill="none"/>
<path d="M1250.5 842.5V641.5" stroke="#f00" stroke-width="1.39" stroke-dasharray="5.14 2.22" fill="none"/>
<rect x="20.5" y="641.5" width="1765" height="201" fill="none" stroke="#fff" stroke-width="1.11"/>
<path d="M20.5 842.5v4.86M265.64 842.5v4.86M510.78 842.5v4.86M755.92 842.5v4.86M1001.06 842.5v4.86M1246.19 842.5v4.86M1491.33 842.5v4.86M1736.47 842.5v4.86" stroke="#fff" stroke-width="1.11" fill="none"/>
<text x="16.09" y="862.3" font-family="Liberation Sans" font-size="14.72" fill="#fff" textLength="8.83" lengthAdjust="spacingAndGlyphs">0</text>
<text x="256.81" y="862.3" font-family="Liberation Sans" font-size="14.72" fill="#fff" textLength="17.66" lengthAdjust="spacingAndGlyphs">50</text>
<text x="497.54" y="862.3" font-family="Liberation Sans" font-size="14.72" fill="#fff" textLength="26.48" lengthAdjust="spacingAndGlyphs">100</text>
<text x="742.67" y="862.3" font-family="Liberation Sans" font-size="14.72" fill="#fff" textLength="26.48" lengthAdjust="spacingAndGlyphs">150</text>
<text x="987.81" y="862.3" font-family="Liberation Sans" font-size="14.72" fill="#fff" textLength="26.48" lengthAdjust="spacingAndGlyphs">200</text>
<text x="1232.95" y="862.3" font-family="Liberation Sans" font-size="14.72" fill="#fff" textLength="26.48" lengthAdjust="spacingAndGlyphs">250</text>
<text x="1478.09" y="862.3" font-family="Liberation Sans" font-size="14.72" fill="#fff" textLength="26.48" lengthAdjust="spacingAndGlyphs">300</text>
<text x="1723.23" y="862.3" font-family="Liberation Sans" font-size="14.72" fill="#fff" textLength="26.48" lengthAdjust="spacingAndGlyphs">350</text>
<text x="829.12" y="882.1" font-family="Liberation Sans" font-size="14.72" fill="#fff" textLength="146.56" lengthAdjust="spacingAndGlyphs">Solar longitude (deg)</text>
</g>
</svg>
</body></html>
